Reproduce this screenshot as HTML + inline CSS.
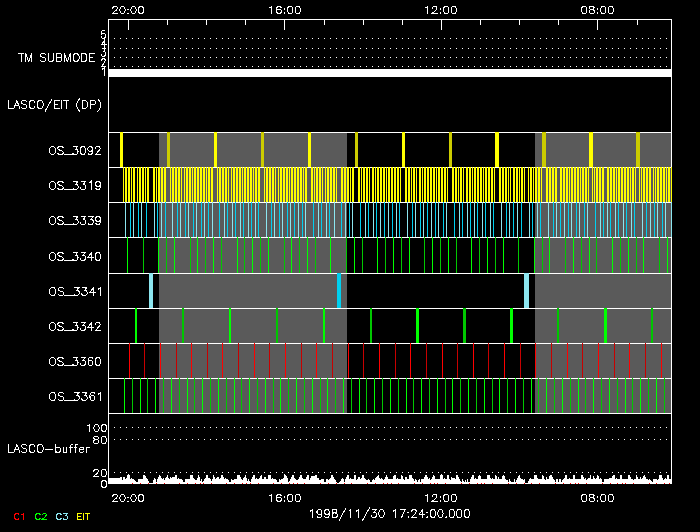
<!DOCTYPE html>
<html><head><meta charset="utf-8"><style>
html,body{margin:0;padding:0;background:#000;width:700px;height:532px;overflow:hidden;font-family:"Liberation Sans",sans-serif;}
svg{display:block}
</style></head><body>
<svg width="700" height="532" viewBox="0 0 700 532">
<rect width="700" height="532" fill="#000"/>
<g shape-rendering="crispEdges">
<rect x="159" y="132" width="188" height="35" fill="#5a5a5a"/>
<rect x="535" y="132" width="136" height="35" fill="#5a5a5a"/>
<rect x="159" y="167" width="188" height="35" fill="#5a5a5a"/>
<rect x="535" y="167" width="136" height="35" fill="#5a5a5a"/>
<rect x="159" y="202" width="188" height="35" fill="#5a5a5a"/>
<rect x="535" y="202" width="136" height="35" fill="#5a5a5a"/>
<rect x="159" y="237" width="188" height="36" fill="#5a5a5a"/>
<rect x="535" y="237" width="136" height="36" fill="#5a5a5a"/>
<rect x="159" y="273" width="188" height="35" fill="#5a5a5a"/>
<rect x="535" y="273" width="136" height="35" fill="#5a5a5a"/>
<rect x="159" y="308" width="188" height="35" fill="#5a5a5a"/>
<rect x="535" y="308" width="136" height="35" fill="#5a5a5a"/>
<rect x="159" y="343" width="188" height="35" fill="#5a5a5a"/>
<rect x="535" y="343" width="136" height="35" fill="#5a5a5a"/>
<rect x="159" y="378" width="188" height="35" fill="#5a5a5a"/>
<rect x="535" y="378" width="136" height="35" fill="#5a5a5a"/>
<rect x="108" y="19" width="564" height="1" fill="#fff"/>
<rect x="108" y="483" width="564" height="1" fill="#fff"/>
<rect x="108" y="19" width="1" height="465" fill="#fff"/>
<rect x="671" y="19" width="1" height="465" fill="#fff"/>
<rect x="108" y="132" width="564" height="1" fill="#fff"/>
<rect x="108" y="167" width="564" height="1" fill="#fff"/>
<rect x="108" y="202" width="564" height="1" fill="#fff"/>
<rect x="108" y="237" width="564" height="1" fill="#fff"/>
<rect x="108" y="273" width="564" height="1" fill="#fff"/>
<rect x="108" y="308" width="564" height="1" fill="#fff"/>
<rect x="108" y="343" width="564" height="1" fill="#fff"/>
<rect x="108" y="378" width="564" height="1" fill="#fff"/>
<rect x="108" y="413" width="564" height="1" fill="#fff"/>
<rect x="128" y="19" width="1" height="11" fill="#fff"/>
<rect x="167" y="19" width="1" height="6" fill="#fff"/>
<rect x="206" y="19" width="1" height="6" fill="#fff"/>
<rect x="245" y="19" width="1" height="6" fill="#fff"/>
<rect x="284" y="19" width="1" height="11" fill="#fff"/>
<rect x="324" y="19" width="1" height="6" fill="#fff"/>
<rect x="363" y="19" width="1" height="6" fill="#fff"/>
<rect x="402" y="19" width="1" height="6" fill="#fff"/>
<rect x="441" y="19" width="1" height="11" fill="#fff"/>
<rect x="480" y="19" width="1" height="6" fill="#fff"/>
<rect x="519" y="19" width="1" height="6" fill="#fff"/>
<rect x="558" y="19" width="1" height="6" fill="#fff"/>
<rect x="597" y="19" width="1" height="11" fill="#fff"/>
<rect x="637" y="19" width="1" height="6" fill="#fff"/>
<rect x="114" y="38" width="1" height="1" fill="#fff"/>
<rect x="120" y="38" width="1" height="1" fill="#fff"/>
<rect x="126" y="38" width="1" height="1" fill="#fff"/>
<rect x="132" y="38" width="1" height="1" fill="#fff"/>
<rect x="138" y="38" width="1" height="1" fill="#fff"/>
<rect x="144" y="38" width="1" height="1" fill="#fff"/>
<rect x="150" y="38" width="1" height="1" fill="#fff"/>
<rect x="156" y="38" width="1" height="1" fill="#fff"/>
<rect x="162" y="38" width="1" height="1" fill="#fff"/>
<rect x="168" y="38" width="1" height="1" fill="#fff"/>
<rect x="174" y="38" width="1" height="1" fill="#fff"/>
<rect x="180" y="38" width="1" height="1" fill="#fff"/>
<rect x="186" y="38" width="1" height="1" fill="#fff"/>
<rect x="192" y="38" width="1" height="1" fill="#fff"/>
<rect x="198" y="38" width="1" height="1" fill="#fff"/>
<rect x="204" y="38" width="1" height="1" fill="#fff"/>
<rect x="210" y="38" width="1" height="1" fill="#fff"/>
<rect x="216" y="38" width="1" height="1" fill="#fff"/>
<rect x="222" y="38" width="1" height="1" fill="#fff"/>
<rect x="228" y="38" width="1" height="1" fill="#fff"/>
<rect x="234" y="38" width="1" height="1" fill="#fff"/>
<rect x="240" y="38" width="1" height="1" fill="#fff"/>
<rect x="246" y="38" width="1" height="1" fill="#fff"/>
<rect x="252" y="38" width="1" height="1" fill="#fff"/>
<rect x="258" y="38" width="1" height="1" fill="#fff"/>
<rect x="264" y="38" width="1" height="1" fill="#fff"/>
<rect x="270" y="38" width="1" height="1" fill="#fff"/>
<rect x="276" y="38" width="1" height="1" fill="#fff"/>
<rect x="282" y="38" width="1" height="1" fill="#fff"/>
<rect x="288" y="38" width="1" height="1" fill="#fff"/>
<rect x="294" y="38" width="1" height="1" fill="#fff"/>
<rect x="300" y="38" width="1" height="1" fill="#fff"/>
<rect x="306" y="38" width="1" height="1" fill="#fff"/>
<rect x="312" y="38" width="1" height="1" fill="#fff"/>
<rect x="318" y="38" width="1" height="1" fill="#fff"/>
<rect x="324" y="38" width="1" height="1" fill="#fff"/>
<rect x="330" y="38" width="1" height="1" fill="#fff"/>
<rect x="336" y="38" width="1" height="1" fill="#fff"/>
<rect x="342" y="38" width="1" height="1" fill="#fff"/>
<rect x="348" y="38" width="1" height="1" fill="#fff"/>
<rect x="354" y="38" width="1" height="1" fill="#fff"/>
<rect x="360" y="38" width="1" height="1" fill="#fff"/>
<rect x="366" y="38" width="1" height="1" fill="#fff"/>
<rect x="372" y="38" width="1" height="1" fill="#fff"/>
<rect x="378" y="38" width="1" height="1" fill="#fff"/>
<rect x="384" y="38" width="1" height="1" fill="#fff"/>
<rect x="390" y="38" width="1" height="1" fill="#fff"/>
<rect x="396" y="38" width="1" height="1" fill="#fff"/>
<rect x="402" y="38" width="1" height="1" fill="#fff"/>
<rect x="408" y="38" width="1" height="1" fill="#fff"/>
<rect x="414" y="38" width="1" height="1" fill="#fff"/>
<rect x="420" y="38" width="1" height="1" fill="#fff"/>
<rect x="426" y="38" width="1" height="1" fill="#fff"/>
<rect x="432" y="38" width="1" height="1" fill="#fff"/>
<rect x="438" y="38" width="1" height="1" fill="#fff"/>
<rect x="444" y="38" width="1" height="1" fill="#fff"/>
<rect x="450" y="38" width="1" height="1" fill="#fff"/>
<rect x="456" y="38" width="1" height="1" fill="#fff"/>
<rect x="462" y="38" width="1" height="1" fill="#fff"/>
<rect x="468" y="38" width="1" height="1" fill="#fff"/>
<rect x="474" y="38" width="1" height="1" fill="#fff"/>
<rect x="480" y="38" width="1" height="1" fill="#fff"/>
<rect x="486" y="38" width="1" height="1" fill="#fff"/>
<rect x="492" y="38" width="1" height="1" fill="#fff"/>
<rect x="498" y="38" width="1" height="1" fill="#fff"/>
<rect x="504" y="38" width="1" height="1" fill="#fff"/>
<rect x="510" y="38" width="1" height="1" fill="#fff"/>
<rect x="516" y="38" width="1" height="1" fill="#fff"/>
<rect x="522" y="38" width="1" height="1" fill="#fff"/>
<rect x="528" y="38" width="1" height="1" fill="#fff"/>
<rect x="534" y="38" width="1" height="1" fill="#fff"/>
<rect x="540" y="38" width="1" height="1" fill="#fff"/>
<rect x="546" y="38" width="1" height="1" fill="#fff"/>
<rect x="552" y="38" width="1" height="1" fill="#fff"/>
<rect x="558" y="38" width="1" height="1" fill="#fff"/>
<rect x="564" y="38" width="1" height="1" fill="#fff"/>
<rect x="570" y="38" width="1" height="1" fill="#fff"/>
<rect x="576" y="38" width="1" height="1" fill="#fff"/>
<rect x="582" y="38" width="1" height="1" fill="#fff"/>
<rect x="588" y="38" width="1" height="1" fill="#fff"/>
<rect x="594" y="38" width="1" height="1" fill="#fff"/>
<rect x="600" y="38" width="1" height="1" fill="#fff"/>
<rect x="606" y="38" width="1" height="1" fill="#fff"/>
<rect x="612" y="38" width="1" height="1" fill="#fff"/>
<rect x="618" y="38" width="1" height="1" fill="#fff"/>
<rect x="624" y="38" width="1" height="1" fill="#fff"/>
<rect x="630" y="38" width="1" height="1" fill="#fff"/>
<rect x="636" y="38" width="1" height="1" fill="#fff"/>
<rect x="642" y="38" width="1" height="1" fill="#fff"/>
<rect x="648" y="38" width="1" height="1" fill="#fff"/>
<rect x="654" y="38" width="1" height="1" fill="#fff"/>
<rect x="660" y="38" width="1" height="1" fill="#fff"/>
<rect x="666" y="38" width="1" height="1" fill="#fff"/>
<rect x="114" y="48" width="1" height="1" fill="#fff"/>
<rect x="120" y="48" width="1" height="1" fill="#fff"/>
<rect x="126" y="48" width="1" height="1" fill="#fff"/>
<rect x="132" y="48" width="1" height="1" fill="#fff"/>
<rect x="138" y="48" width="1" height="1" fill="#fff"/>
<rect x="144" y="48" width="1" height="1" fill="#fff"/>
<rect x="150" y="48" width="1" height="1" fill="#fff"/>
<rect x="156" y="48" width="1" height="1" fill="#fff"/>
<rect x="162" y="48" width="1" height="1" fill="#fff"/>
<rect x="168" y="48" width="1" height="1" fill="#fff"/>
<rect x="174" y="48" width="1" height="1" fill="#fff"/>
<rect x="180" y="48" width="1" height="1" fill="#fff"/>
<rect x="186" y="48" width="1" height="1" fill="#fff"/>
<rect x="192" y="48" width="1" height="1" fill="#fff"/>
<rect x="198" y="48" width="1" height="1" fill="#fff"/>
<rect x="204" y="48" width="1" height="1" fill="#fff"/>
<rect x="210" y="48" width="1" height="1" fill="#fff"/>
<rect x="216" y="48" width="1" height="1" fill="#fff"/>
<rect x="222" y="48" width="1" height="1" fill="#fff"/>
<rect x="228" y="48" width="1" height="1" fill="#fff"/>
<rect x="234" y="48" width="1" height="1" fill="#fff"/>
<rect x="240" y="48" width="1" height="1" fill="#fff"/>
<rect x="246" y="48" width="1" height="1" fill="#fff"/>
<rect x="252" y="48" width="1" height="1" fill="#fff"/>
<rect x="258" y="48" width="1" height="1" fill="#fff"/>
<rect x="264" y="48" width="1" height="1" fill="#fff"/>
<rect x="270" y="48" width="1" height="1" fill="#fff"/>
<rect x="276" y="48" width="1" height="1" fill="#fff"/>
<rect x="282" y="48" width="1" height="1" fill="#fff"/>
<rect x="288" y="48" width="1" height="1" fill="#fff"/>
<rect x="294" y="48" width="1" height="1" fill="#fff"/>
<rect x="300" y="48" width="1" height="1" fill="#fff"/>
<rect x="306" y="48" width="1" height="1" fill="#fff"/>
<rect x="312" y="48" width="1" height="1" fill="#fff"/>
<rect x="318" y="48" width="1" height="1" fill="#fff"/>
<rect x="324" y="48" width="1" height="1" fill="#fff"/>
<rect x="330" y="48" width="1" height="1" fill="#fff"/>
<rect x="336" y="48" width="1" height="1" fill="#fff"/>
<rect x="342" y="48" width="1" height="1" fill="#fff"/>
<rect x="348" y="48" width="1" height="1" fill="#fff"/>
<rect x="354" y="48" width="1" height="1" fill="#fff"/>
<rect x="360" y="48" width="1" height="1" fill="#fff"/>
<rect x="366" y="48" width="1" height="1" fill="#fff"/>
<rect x="372" y="48" width="1" height="1" fill="#fff"/>
<rect x="378" y="48" width="1" height="1" fill="#fff"/>
<rect x="384" y="48" width="1" height="1" fill="#fff"/>
<rect x="390" y="48" width="1" height="1" fill="#fff"/>
<rect x="396" y="48" width="1" height="1" fill="#fff"/>
<rect x="402" y="48" width="1" height="1" fill="#fff"/>
<rect x="408" y="48" width="1" height="1" fill="#fff"/>
<rect x="414" y="48" width="1" height="1" fill="#fff"/>
<rect x="420" y="48" width="1" height="1" fill="#fff"/>
<rect x="426" y="48" width="1" height="1" fill="#fff"/>
<rect x="432" y="48" width="1" height="1" fill="#fff"/>
<rect x="438" y="48" width="1" height="1" fill="#fff"/>
<rect x="444" y="48" width="1" height="1" fill="#fff"/>
<rect x="450" y="48" width="1" height="1" fill="#fff"/>
<rect x="456" y="48" width="1" height="1" fill="#fff"/>
<rect x="462" y="48" width="1" height="1" fill="#fff"/>
<rect x="468" y="48" width="1" height="1" fill="#fff"/>
<rect x="474" y="48" width="1" height="1" fill="#fff"/>
<rect x="480" y="48" width="1" height="1" fill="#fff"/>
<rect x="486" y="48" width="1" height="1" fill="#fff"/>
<rect x="492" y="48" width="1" height="1" fill="#fff"/>
<rect x="498" y="48" width="1" height="1" fill="#fff"/>
<rect x="504" y="48" width="1" height="1" fill="#fff"/>
<rect x="510" y="48" width="1" height="1" fill="#fff"/>
<rect x="516" y="48" width="1" height="1" fill="#fff"/>
<rect x="522" y="48" width="1" height="1" fill="#fff"/>
<rect x="528" y="48" width="1" height="1" fill="#fff"/>
<rect x="534" y="48" width="1" height="1" fill="#fff"/>
<rect x="540" y="48" width="1" height="1" fill="#fff"/>
<rect x="546" y="48" width="1" height="1" fill="#fff"/>
<rect x="552" y="48" width="1" height="1" fill="#fff"/>
<rect x="558" y="48" width="1" height="1" fill="#fff"/>
<rect x="564" y="48" width="1" height="1" fill="#fff"/>
<rect x="570" y="48" width="1" height="1" fill="#fff"/>
<rect x="576" y="48" width="1" height="1" fill="#fff"/>
<rect x="582" y="48" width="1" height="1" fill="#fff"/>
<rect x="588" y="48" width="1" height="1" fill="#fff"/>
<rect x="594" y="48" width="1" height="1" fill="#fff"/>
<rect x="600" y="48" width="1" height="1" fill="#fff"/>
<rect x="606" y="48" width="1" height="1" fill="#fff"/>
<rect x="612" y="48" width="1" height="1" fill="#fff"/>
<rect x="618" y="48" width="1" height="1" fill="#fff"/>
<rect x="624" y="48" width="1" height="1" fill="#fff"/>
<rect x="630" y="48" width="1" height="1" fill="#fff"/>
<rect x="636" y="48" width="1" height="1" fill="#fff"/>
<rect x="642" y="48" width="1" height="1" fill="#fff"/>
<rect x="648" y="48" width="1" height="1" fill="#fff"/>
<rect x="654" y="48" width="1" height="1" fill="#fff"/>
<rect x="660" y="48" width="1" height="1" fill="#fff"/>
<rect x="666" y="48" width="1" height="1" fill="#fff"/>
<rect x="114" y="57" width="1" height="1" fill="#fff"/>
<rect x="120" y="57" width="1" height="1" fill="#fff"/>
<rect x="126" y="57" width="1" height="1" fill="#fff"/>
<rect x="132" y="57" width="1" height="1" fill="#fff"/>
<rect x="138" y="57" width="1" height="1" fill="#fff"/>
<rect x="144" y="57" width="1" height="1" fill="#fff"/>
<rect x="150" y="57" width="1" height="1" fill="#fff"/>
<rect x="156" y="57" width="1" height="1" fill="#fff"/>
<rect x="162" y="57" width="1" height="1" fill="#fff"/>
<rect x="168" y="57" width="1" height="1" fill="#fff"/>
<rect x="174" y="57" width="1" height="1" fill="#fff"/>
<rect x="180" y="57" width="1" height="1" fill="#fff"/>
<rect x="186" y="57" width="1" height="1" fill="#fff"/>
<rect x="192" y="57" width="1" height="1" fill="#fff"/>
<rect x="198" y="57" width="1" height="1" fill="#fff"/>
<rect x="204" y="57" width="1" height="1" fill="#fff"/>
<rect x="210" y="57" width="1" height="1" fill="#fff"/>
<rect x="216" y="57" width="1" height="1" fill="#fff"/>
<rect x="222" y="57" width="1" height="1" fill="#fff"/>
<rect x="228" y="57" width="1" height="1" fill="#fff"/>
<rect x="234" y="57" width="1" height="1" fill="#fff"/>
<rect x="240" y="57" width="1" height="1" fill="#fff"/>
<rect x="246" y="57" width="1" height="1" fill="#fff"/>
<rect x="252" y="57" width="1" height="1" fill="#fff"/>
<rect x="258" y="57" width="1" height="1" fill="#fff"/>
<rect x="264" y="57" width="1" height="1" fill="#fff"/>
<rect x="270" y="57" width="1" height="1" fill="#fff"/>
<rect x="276" y="57" width="1" height="1" fill="#fff"/>
<rect x="282" y="57" width="1" height="1" fill="#fff"/>
<rect x="288" y="57" width="1" height="1" fill="#fff"/>
<rect x="294" y="57" width="1" height="1" fill="#fff"/>
<rect x="300" y="57" width="1" height="1" fill="#fff"/>
<rect x="306" y="57" width="1" height="1" fill="#fff"/>
<rect x="312" y="57" width="1" height="1" fill="#fff"/>
<rect x="318" y="57" width="1" height="1" fill="#fff"/>
<rect x="324" y="57" width="1" height="1" fill="#fff"/>
<rect x="330" y="57" width="1" height="1" fill="#fff"/>
<rect x="336" y="57" width="1" height="1" fill="#fff"/>
<rect x="342" y="57" width="1" height="1" fill="#fff"/>
<rect x="348" y="57" width="1" height="1" fill="#fff"/>
<rect x="354" y="57" width="1" height="1" fill="#fff"/>
<rect x="360" y="57" width="1" height="1" fill="#fff"/>
<rect x="366" y="57" width="1" height="1" fill="#fff"/>
<rect x="372" y="57" width="1" height="1" fill="#fff"/>
<rect x="378" y="57" width="1" height="1" fill="#fff"/>
<rect x="384" y="57" width="1" height="1" fill="#fff"/>
<rect x="390" y="57" width="1" height="1" fill="#fff"/>
<rect x="396" y="57" width="1" height="1" fill="#fff"/>
<rect x="402" y="57" width="1" height="1" fill="#fff"/>
<rect x="408" y="57" width="1" height="1" fill="#fff"/>
<rect x="414" y="57" width="1" height="1" fill="#fff"/>
<rect x="420" y="57" width="1" height="1" fill="#fff"/>
<rect x="426" y="57" width="1" height="1" fill="#fff"/>
<rect x="432" y="57" width="1" height="1" fill="#fff"/>
<rect x="438" y="57" width="1" height="1" fill="#fff"/>
<rect x="444" y="57" width="1" height="1" fill="#fff"/>
<rect x="450" y="57" width="1" height="1" fill="#fff"/>
<rect x="456" y="57" width="1" height="1" fill="#fff"/>
<rect x="462" y="57" width="1" height="1" fill="#fff"/>
<rect x="468" y="57" width="1" height="1" fill="#fff"/>
<rect x="474" y="57" width="1" height="1" fill="#fff"/>
<rect x="480" y="57" width="1" height="1" fill="#fff"/>
<rect x="486" y="57" width="1" height="1" fill="#fff"/>
<rect x="492" y="57" width="1" height="1" fill="#fff"/>
<rect x="498" y="57" width="1" height="1" fill="#fff"/>
<rect x="504" y="57" width="1" height="1" fill="#fff"/>
<rect x="510" y="57" width="1" height="1" fill="#fff"/>
<rect x="516" y="57" width="1" height="1" fill="#fff"/>
<rect x="522" y="57" width="1" height="1" fill="#fff"/>
<rect x="528" y="57" width="1" height="1" fill="#fff"/>
<rect x="534" y="57" width="1" height="1" fill="#fff"/>
<rect x="540" y="57" width="1" height="1" fill="#fff"/>
<rect x="546" y="57" width="1" height="1" fill="#fff"/>
<rect x="552" y="57" width="1" height="1" fill="#fff"/>
<rect x="558" y="57" width="1" height="1" fill="#fff"/>
<rect x="564" y="57" width="1" height="1" fill="#fff"/>
<rect x="570" y="57" width="1" height="1" fill="#fff"/>
<rect x="576" y="57" width="1" height="1" fill="#fff"/>
<rect x="582" y="57" width="1" height="1" fill="#fff"/>
<rect x="588" y="57" width="1" height="1" fill="#fff"/>
<rect x="594" y="57" width="1" height="1" fill="#fff"/>
<rect x="600" y="57" width="1" height="1" fill="#fff"/>
<rect x="606" y="57" width="1" height="1" fill="#fff"/>
<rect x="612" y="57" width="1" height="1" fill="#fff"/>
<rect x="618" y="57" width="1" height="1" fill="#fff"/>
<rect x="624" y="57" width="1" height="1" fill="#fff"/>
<rect x="630" y="57" width="1" height="1" fill="#fff"/>
<rect x="636" y="57" width="1" height="1" fill="#fff"/>
<rect x="642" y="57" width="1" height="1" fill="#fff"/>
<rect x="648" y="57" width="1" height="1" fill="#fff"/>
<rect x="654" y="57" width="1" height="1" fill="#fff"/>
<rect x="660" y="57" width="1" height="1" fill="#fff"/>
<rect x="666" y="57" width="1" height="1" fill="#fff"/>
<rect x="114" y="66" width="1" height="1" fill="#fff"/>
<rect x="120" y="66" width="1" height="1" fill="#fff"/>
<rect x="126" y="66" width="1" height="1" fill="#fff"/>
<rect x="132" y="66" width="1" height="1" fill="#fff"/>
<rect x="138" y="66" width="1" height="1" fill="#fff"/>
<rect x="144" y="66" width="1" height="1" fill="#fff"/>
<rect x="150" y="66" width="1" height="1" fill="#fff"/>
<rect x="156" y="66" width="1" height="1" fill="#fff"/>
<rect x="162" y="66" width="1" height="1" fill="#fff"/>
<rect x="168" y="66" width="1" height="1" fill="#fff"/>
<rect x="174" y="66" width="1" height="1" fill="#fff"/>
<rect x="180" y="66" width="1" height="1" fill="#fff"/>
<rect x="186" y="66" width="1" height="1" fill="#fff"/>
<rect x="192" y="66" width="1" height="1" fill="#fff"/>
<rect x="198" y="66" width="1" height="1" fill="#fff"/>
<rect x="204" y="66" width="1" height="1" fill="#fff"/>
<rect x="210" y="66" width="1" height="1" fill="#fff"/>
<rect x="216" y="66" width="1" height="1" fill="#fff"/>
<rect x="222" y="66" width="1" height="1" fill="#fff"/>
<rect x="228" y="66" width="1" height="1" fill="#fff"/>
<rect x="234" y="66" width="1" height="1" fill="#fff"/>
<rect x="240" y="66" width="1" height="1" fill="#fff"/>
<rect x="246" y="66" width="1" height="1" fill="#fff"/>
<rect x="252" y="66" width="1" height="1" fill="#fff"/>
<rect x="258" y="66" width="1" height="1" fill="#fff"/>
<rect x="264" y="66" width="1" height="1" fill="#fff"/>
<rect x="270" y="66" width="1" height="1" fill="#fff"/>
<rect x="276" y="66" width="1" height="1" fill="#fff"/>
<rect x="282" y="66" width="1" height="1" fill="#fff"/>
<rect x="288" y="66" width="1" height="1" fill="#fff"/>
<rect x="294" y="66" width="1" height="1" fill="#fff"/>
<rect x="300" y="66" width="1" height="1" fill="#fff"/>
<rect x="306" y="66" width="1" height="1" fill="#fff"/>
<rect x="312" y="66" width="1" height="1" fill="#fff"/>
<rect x="318" y="66" width="1" height="1" fill="#fff"/>
<rect x="324" y="66" width="1" height="1" fill="#fff"/>
<rect x="330" y="66" width="1" height="1" fill="#fff"/>
<rect x="336" y="66" width="1" height="1" fill="#fff"/>
<rect x="342" y="66" width="1" height="1" fill="#fff"/>
<rect x="348" y="66" width="1" height="1" fill="#fff"/>
<rect x="354" y="66" width="1" height="1" fill="#fff"/>
<rect x="360" y="66" width="1" height="1" fill="#fff"/>
<rect x="366" y="66" width="1" height="1" fill="#fff"/>
<rect x="372" y="66" width="1" height="1" fill="#fff"/>
<rect x="378" y="66" width="1" height="1" fill="#fff"/>
<rect x="384" y="66" width="1" height="1" fill="#fff"/>
<rect x="390" y="66" width="1" height="1" fill="#fff"/>
<rect x="396" y="66" width="1" height="1" fill="#fff"/>
<rect x="402" y="66" width="1" height="1" fill="#fff"/>
<rect x="408" y="66" width="1" height="1" fill="#fff"/>
<rect x="414" y="66" width="1" height="1" fill="#fff"/>
<rect x="420" y="66" width="1" height="1" fill="#fff"/>
<rect x="426" y="66" width="1" height="1" fill="#fff"/>
<rect x="432" y="66" width="1" height="1" fill="#fff"/>
<rect x="438" y="66" width="1" height="1" fill="#fff"/>
<rect x="444" y="66" width="1" height="1" fill="#fff"/>
<rect x="450" y="66" width="1" height="1" fill="#fff"/>
<rect x="456" y="66" width="1" height="1" fill="#fff"/>
<rect x="462" y="66" width="1" height="1" fill="#fff"/>
<rect x="468" y="66" width="1" height="1" fill="#fff"/>
<rect x="474" y="66" width="1" height="1" fill="#fff"/>
<rect x="480" y="66" width="1" height="1" fill="#fff"/>
<rect x="486" y="66" width="1" height="1" fill="#fff"/>
<rect x="492" y="66" width="1" height="1" fill="#fff"/>
<rect x="498" y="66" width="1" height="1" fill="#fff"/>
<rect x="504" y="66" width="1" height="1" fill="#fff"/>
<rect x="510" y="66" width="1" height="1" fill="#fff"/>
<rect x="516" y="66" width="1" height="1" fill="#fff"/>
<rect x="522" y="66" width="1" height="1" fill="#fff"/>
<rect x="528" y="66" width="1" height="1" fill="#fff"/>
<rect x="534" y="66" width="1" height="1" fill="#fff"/>
<rect x="540" y="66" width="1" height="1" fill="#fff"/>
<rect x="546" y="66" width="1" height="1" fill="#fff"/>
<rect x="552" y="66" width="1" height="1" fill="#fff"/>
<rect x="558" y="66" width="1" height="1" fill="#fff"/>
<rect x="564" y="66" width="1" height="1" fill="#fff"/>
<rect x="570" y="66" width="1" height="1" fill="#fff"/>
<rect x="576" y="66" width="1" height="1" fill="#fff"/>
<rect x="582" y="66" width="1" height="1" fill="#fff"/>
<rect x="588" y="66" width="1" height="1" fill="#fff"/>
<rect x="594" y="66" width="1" height="1" fill="#fff"/>
<rect x="600" y="66" width="1" height="1" fill="#fff"/>
<rect x="606" y="66" width="1" height="1" fill="#fff"/>
<rect x="612" y="66" width="1" height="1" fill="#fff"/>
<rect x="618" y="66" width="1" height="1" fill="#fff"/>
<rect x="624" y="66" width="1" height="1" fill="#fff"/>
<rect x="630" y="66" width="1" height="1" fill="#fff"/>
<rect x="636" y="66" width="1" height="1" fill="#fff"/>
<rect x="642" y="66" width="1" height="1" fill="#fff"/>
<rect x="648" y="66" width="1" height="1" fill="#fff"/>
<rect x="654" y="66" width="1" height="1" fill="#fff"/>
<rect x="660" y="66" width="1" height="1" fill="#fff"/>
<rect x="666" y="66" width="1" height="1" fill="#fff"/>
<rect x="114" y="427" width="1" height="1" fill="#fff"/>
<rect x="120" y="427" width="1" height="1" fill="#fff"/>
<rect x="126" y="427" width="1" height="1" fill="#fff"/>
<rect x="132" y="427" width="1" height="1" fill="#fff"/>
<rect x="138" y="427" width="1" height="1" fill="#fff"/>
<rect x="144" y="427" width="1" height="1" fill="#fff"/>
<rect x="150" y="427" width="1" height="1" fill="#fff"/>
<rect x="156" y="427" width="1" height="1" fill="#fff"/>
<rect x="162" y="427" width="1" height="1" fill="#fff"/>
<rect x="168" y="427" width="1" height="1" fill="#fff"/>
<rect x="174" y="427" width="1" height="1" fill="#fff"/>
<rect x="180" y="427" width="1" height="1" fill="#fff"/>
<rect x="186" y="427" width="1" height="1" fill="#fff"/>
<rect x="192" y="427" width="1" height="1" fill="#fff"/>
<rect x="198" y="427" width="1" height="1" fill="#fff"/>
<rect x="204" y="427" width="1" height="1" fill="#fff"/>
<rect x="210" y="427" width="1" height="1" fill="#fff"/>
<rect x="216" y="427" width="1" height="1" fill="#fff"/>
<rect x="222" y="427" width="1" height="1" fill="#fff"/>
<rect x="228" y="427" width="1" height="1" fill="#fff"/>
<rect x="234" y="427" width="1" height="1" fill="#fff"/>
<rect x="240" y="427" width="1" height="1" fill="#fff"/>
<rect x="246" y="427" width="1" height="1" fill="#fff"/>
<rect x="252" y="427" width="1" height="1" fill="#fff"/>
<rect x="258" y="427" width="1" height="1" fill="#fff"/>
<rect x="264" y="427" width="1" height="1" fill="#fff"/>
<rect x="270" y="427" width="1" height="1" fill="#fff"/>
<rect x="276" y="427" width="1" height="1" fill="#fff"/>
<rect x="282" y="427" width="1" height="1" fill="#fff"/>
<rect x="288" y="427" width="1" height="1" fill="#fff"/>
<rect x="294" y="427" width="1" height="1" fill="#fff"/>
<rect x="300" y="427" width="1" height="1" fill="#fff"/>
<rect x="306" y="427" width="1" height="1" fill="#fff"/>
<rect x="312" y="427" width="1" height="1" fill="#fff"/>
<rect x="318" y="427" width="1" height="1" fill="#fff"/>
<rect x="324" y="427" width="1" height="1" fill="#fff"/>
<rect x="330" y="427" width="1" height="1" fill="#fff"/>
<rect x="336" y="427" width="1" height="1" fill="#fff"/>
<rect x="342" y="427" width="1" height="1" fill="#fff"/>
<rect x="348" y="427" width="1" height="1" fill="#fff"/>
<rect x="354" y="427" width="1" height="1" fill="#fff"/>
<rect x="360" y="427" width="1" height="1" fill="#fff"/>
<rect x="366" y="427" width="1" height="1" fill="#fff"/>
<rect x="372" y="427" width="1" height="1" fill="#fff"/>
<rect x="378" y="427" width="1" height="1" fill="#fff"/>
<rect x="384" y="427" width="1" height="1" fill="#fff"/>
<rect x="390" y="427" width="1" height="1" fill="#fff"/>
<rect x="396" y="427" width="1" height="1" fill="#fff"/>
<rect x="402" y="427" width="1" height="1" fill="#fff"/>
<rect x="408" y="427" width="1" height="1" fill="#fff"/>
<rect x="414" y="427" width="1" height="1" fill="#fff"/>
<rect x="420" y="427" width="1" height="1" fill="#fff"/>
<rect x="426" y="427" width="1" height="1" fill="#fff"/>
<rect x="432" y="427" width="1" height="1" fill="#fff"/>
<rect x="438" y="427" width="1" height="1" fill="#fff"/>
<rect x="444" y="427" width="1" height="1" fill="#fff"/>
<rect x="450" y="427" width="1" height="1" fill="#fff"/>
<rect x="456" y="427" width="1" height="1" fill="#fff"/>
<rect x="462" y="427" width="1" height="1" fill="#fff"/>
<rect x="468" y="427" width="1" height="1" fill="#fff"/>
<rect x="474" y="427" width="1" height="1" fill="#fff"/>
<rect x="480" y="427" width="1" height="1" fill="#fff"/>
<rect x="486" y="427" width="1" height="1" fill="#fff"/>
<rect x="492" y="427" width="1" height="1" fill="#fff"/>
<rect x="498" y="427" width="1" height="1" fill="#fff"/>
<rect x="504" y="427" width="1" height="1" fill="#fff"/>
<rect x="510" y="427" width="1" height="1" fill="#fff"/>
<rect x="516" y="427" width="1" height="1" fill="#fff"/>
<rect x="522" y="427" width="1" height="1" fill="#fff"/>
<rect x="528" y="427" width="1" height="1" fill="#fff"/>
<rect x="534" y="427" width="1" height="1" fill="#fff"/>
<rect x="540" y="427" width="1" height="1" fill="#fff"/>
<rect x="546" y="427" width="1" height="1" fill="#fff"/>
<rect x="552" y="427" width="1" height="1" fill="#fff"/>
<rect x="558" y="427" width="1" height="1" fill="#fff"/>
<rect x="564" y="427" width="1" height="1" fill="#fff"/>
<rect x="570" y="427" width="1" height="1" fill="#fff"/>
<rect x="576" y="427" width="1" height="1" fill="#fff"/>
<rect x="582" y="427" width="1" height="1" fill="#fff"/>
<rect x="588" y="427" width="1" height="1" fill="#fff"/>
<rect x="594" y="427" width="1" height="1" fill="#fff"/>
<rect x="600" y="427" width="1" height="1" fill="#fff"/>
<rect x="606" y="427" width="1" height="1" fill="#fff"/>
<rect x="612" y="427" width="1" height="1" fill="#fff"/>
<rect x="618" y="427" width="1" height="1" fill="#fff"/>
<rect x="624" y="427" width="1" height="1" fill="#fff"/>
<rect x="630" y="427" width="1" height="1" fill="#fff"/>
<rect x="636" y="427" width="1" height="1" fill="#fff"/>
<rect x="642" y="427" width="1" height="1" fill="#fff"/>
<rect x="648" y="427" width="1" height="1" fill="#fff"/>
<rect x="654" y="427" width="1" height="1" fill="#fff"/>
<rect x="660" y="427" width="1" height="1" fill="#fff"/>
<rect x="666" y="427" width="1" height="1" fill="#fff"/>
<rect x="114" y="439" width="1" height="1" fill="#fff"/>
<rect x="120" y="439" width="1" height="1" fill="#fff"/>
<rect x="126" y="439" width="1" height="1" fill="#fff"/>
<rect x="132" y="439" width="1" height="1" fill="#fff"/>
<rect x="138" y="439" width="1" height="1" fill="#fff"/>
<rect x="144" y="439" width="1" height="1" fill="#fff"/>
<rect x="150" y="439" width="1" height="1" fill="#fff"/>
<rect x="156" y="439" width="1" height="1" fill="#fff"/>
<rect x="162" y="439" width="1" height="1" fill="#fff"/>
<rect x="168" y="439" width="1" height="1" fill="#fff"/>
<rect x="174" y="439" width="1" height="1" fill="#fff"/>
<rect x="180" y="439" width="1" height="1" fill="#fff"/>
<rect x="186" y="439" width="1" height="1" fill="#fff"/>
<rect x="192" y="439" width="1" height="1" fill="#fff"/>
<rect x="198" y="439" width="1" height="1" fill="#fff"/>
<rect x="204" y="439" width="1" height="1" fill="#fff"/>
<rect x="210" y="439" width="1" height="1" fill="#fff"/>
<rect x="216" y="439" width="1" height="1" fill="#fff"/>
<rect x="222" y="439" width="1" height="1" fill="#fff"/>
<rect x="228" y="439" width="1" height="1" fill="#fff"/>
<rect x="234" y="439" width="1" height="1" fill="#fff"/>
<rect x="240" y="439" width="1" height="1" fill="#fff"/>
<rect x="246" y="439" width="1" height="1" fill="#fff"/>
<rect x="252" y="439" width="1" height="1" fill="#fff"/>
<rect x="258" y="439" width="1" height="1" fill="#fff"/>
<rect x="264" y="439" width="1" height="1" fill="#fff"/>
<rect x="270" y="439" width="1" height="1" fill="#fff"/>
<rect x="276" y="439" width="1" height="1" fill="#fff"/>
<rect x="282" y="439" width="1" height="1" fill="#fff"/>
<rect x="288" y="439" width="1" height="1" fill="#fff"/>
<rect x="294" y="439" width="1" height="1" fill="#fff"/>
<rect x="300" y="439" width="1" height="1" fill="#fff"/>
<rect x="306" y="439" width="1" height="1" fill="#fff"/>
<rect x="312" y="439" width="1" height="1" fill="#fff"/>
<rect x="318" y="439" width="1" height="1" fill="#fff"/>
<rect x="324" y="439" width="1" height="1" fill="#fff"/>
<rect x="330" y="439" width="1" height="1" fill="#fff"/>
<rect x="336" y="439" width="1" height="1" fill="#fff"/>
<rect x="342" y="439" width="1" height="1" fill="#fff"/>
<rect x="348" y="439" width="1" height="1" fill="#fff"/>
<rect x="354" y="439" width="1" height="1" fill="#fff"/>
<rect x="360" y="439" width="1" height="1" fill="#fff"/>
<rect x="366" y="439" width="1" height="1" fill="#fff"/>
<rect x="372" y="439" width="1" height="1" fill="#fff"/>
<rect x="378" y="439" width="1" height="1" fill="#fff"/>
<rect x="384" y="439" width="1" height="1" fill="#fff"/>
<rect x="390" y="439" width="1" height="1" fill="#fff"/>
<rect x="396" y="439" width="1" height="1" fill="#fff"/>
<rect x="402" y="439" width="1" height="1" fill="#fff"/>
<rect x="408" y="439" width="1" height="1" fill="#fff"/>
<rect x="414" y="439" width="1" height="1" fill="#fff"/>
<rect x="420" y="439" width="1" height="1" fill="#fff"/>
<rect x="426" y="439" width="1" height="1" fill="#fff"/>
<rect x="432" y="439" width="1" height="1" fill="#fff"/>
<rect x="438" y="439" width="1" height="1" fill="#fff"/>
<rect x="444" y="439" width="1" height="1" fill="#fff"/>
<rect x="450" y="439" width="1" height="1" fill="#fff"/>
<rect x="456" y="439" width="1" height="1" fill="#fff"/>
<rect x="462" y="439" width="1" height="1" fill="#fff"/>
<rect x="468" y="439" width="1" height="1" fill="#fff"/>
<rect x="474" y="439" width="1" height="1" fill="#fff"/>
<rect x="480" y="439" width="1" height="1" fill="#fff"/>
<rect x="486" y="439" width="1" height="1" fill="#fff"/>
<rect x="492" y="439" width="1" height="1" fill="#fff"/>
<rect x="498" y="439" width="1" height="1" fill="#fff"/>
<rect x="504" y="439" width="1" height="1" fill="#fff"/>
<rect x="510" y="439" width="1" height="1" fill="#fff"/>
<rect x="516" y="439" width="1" height="1" fill="#fff"/>
<rect x="522" y="439" width="1" height="1" fill="#fff"/>
<rect x="528" y="439" width="1" height="1" fill="#fff"/>
<rect x="534" y="439" width="1" height="1" fill="#fff"/>
<rect x="540" y="439" width="1" height="1" fill="#fff"/>
<rect x="546" y="439" width="1" height="1" fill="#fff"/>
<rect x="552" y="439" width="1" height="1" fill="#fff"/>
<rect x="558" y="439" width="1" height="1" fill="#fff"/>
<rect x="564" y="439" width="1" height="1" fill="#fff"/>
<rect x="570" y="439" width="1" height="1" fill="#fff"/>
<rect x="576" y="439" width="1" height="1" fill="#fff"/>
<rect x="582" y="439" width="1" height="1" fill="#fff"/>
<rect x="588" y="439" width="1" height="1" fill="#fff"/>
<rect x="594" y="439" width="1" height="1" fill="#fff"/>
<rect x="600" y="439" width="1" height="1" fill="#fff"/>
<rect x="606" y="439" width="1" height="1" fill="#fff"/>
<rect x="612" y="439" width="1" height="1" fill="#fff"/>
<rect x="618" y="439" width="1" height="1" fill="#fff"/>
<rect x="624" y="439" width="1" height="1" fill="#fff"/>
<rect x="630" y="439" width="1" height="1" fill="#fff"/>
<rect x="636" y="439" width="1" height="1" fill="#fff"/>
<rect x="642" y="439" width="1" height="1" fill="#fff"/>
<rect x="648" y="439" width="1" height="1" fill="#fff"/>
<rect x="654" y="439" width="1" height="1" fill="#fff"/>
<rect x="660" y="439" width="1" height="1" fill="#fff"/>
<rect x="666" y="439" width="1" height="1" fill="#fff"/>
<rect x="114" y="472" width="1" height="1" fill="#fff"/>
<rect x="120" y="472" width="1" height="1" fill="#fff"/>
<rect x="126" y="472" width="1" height="1" fill="#fff"/>
<rect x="132" y="472" width="1" height="1" fill="#fff"/>
<rect x="138" y="472" width="1" height="1" fill="#fff"/>
<rect x="144" y="472" width="1" height="1" fill="#fff"/>
<rect x="150" y="472" width="1" height="1" fill="#fff"/>
<rect x="156" y="472" width="1" height="1" fill="#fff"/>
<rect x="162" y="472" width="1" height="1" fill="#fff"/>
<rect x="168" y="472" width="1" height="1" fill="#fff"/>
<rect x="174" y="472" width="1" height="1" fill="#fff"/>
<rect x="180" y="472" width="1" height="1" fill="#fff"/>
<rect x="186" y="472" width="1" height="1" fill="#fff"/>
<rect x="192" y="472" width="1" height="1" fill="#fff"/>
<rect x="198" y="472" width="1" height="1" fill="#fff"/>
<rect x="204" y="472" width="1" height="1" fill="#fff"/>
<rect x="210" y="472" width="1" height="1" fill="#fff"/>
<rect x="216" y="472" width="1" height="1" fill="#fff"/>
<rect x="222" y="472" width="1" height="1" fill="#fff"/>
<rect x="228" y="472" width="1" height="1" fill="#fff"/>
<rect x="234" y="472" width="1" height="1" fill="#fff"/>
<rect x="240" y="472" width="1" height="1" fill="#fff"/>
<rect x="246" y="472" width="1" height="1" fill="#fff"/>
<rect x="252" y="472" width="1" height="1" fill="#fff"/>
<rect x="258" y="472" width="1" height="1" fill="#fff"/>
<rect x="264" y="472" width="1" height="1" fill="#fff"/>
<rect x="270" y="472" width="1" height="1" fill="#fff"/>
<rect x="276" y="472" width="1" height="1" fill="#fff"/>
<rect x="282" y="472" width="1" height="1" fill="#fff"/>
<rect x="288" y="472" width="1" height="1" fill="#fff"/>
<rect x="294" y="472" width="1" height="1" fill="#fff"/>
<rect x="300" y="472" width="1" height="1" fill="#fff"/>
<rect x="306" y="472" width="1" height="1" fill="#fff"/>
<rect x="312" y="472" width="1" height="1" fill="#fff"/>
<rect x="318" y="472" width="1" height="1" fill="#fff"/>
<rect x="324" y="472" width="1" height="1" fill="#fff"/>
<rect x="330" y="472" width="1" height="1" fill="#fff"/>
<rect x="336" y="472" width="1" height="1" fill="#fff"/>
<rect x="342" y="472" width="1" height="1" fill="#fff"/>
<rect x="348" y="472" width="1" height="1" fill="#fff"/>
<rect x="354" y="472" width="1" height="1" fill="#fff"/>
<rect x="360" y="472" width="1" height="1" fill="#fff"/>
<rect x="366" y="472" width="1" height="1" fill="#fff"/>
<rect x="372" y="472" width="1" height="1" fill="#fff"/>
<rect x="378" y="472" width="1" height="1" fill="#fff"/>
<rect x="384" y="472" width="1" height="1" fill="#fff"/>
<rect x="390" y="472" width="1" height="1" fill="#fff"/>
<rect x="396" y="472" width="1" height="1" fill="#fff"/>
<rect x="402" y="472" width="1" height="1" fill="#fff"/>
<rect x="408" y="472" width="1" height="1" fill="#fff"/>
<rect x="414" y="472" width="1" height="1" fill="#fff"/>
<rect x="420" y="472" width="1" height="1" fill="#fff"/>
<rect x="426" y="472" width="1" height="1" fill="#fff"/>
<rect x="432" y="472" width="1" height="1" fill="#fff"/>
<rect x="438" y="472" width="1" height="1" fill="#fff"/>
<rect x="444" y="472" width="1" height="1" fill="#fff"/>
<rect x="450" y="472" width="1" height="1" fill="#fff"/>
<rect x="456" y="472" width="1" height="1" fill="#fff"/>
<rect x="462" y="472" width="1" height="1" fill="#fff"/>
<rect x="468" y="472" width="1" height="1" fill="#fff"/>
<rect x="474" y="472" width="1" height="1" fill="#fff"/>
<rect x="480" y="472" width="1" height="1" fill="#fff"/>
<rect x="486" y="472" width="1" height="1" fill="#fff"/>
<rect x="492" y="472" width="1" height="1" fill="#fff"/>
<rect x="498" y="472" width="1" height="1" fill="#fff"/>
<rect x="504" y="472" width="1" height="1" fill="#fff"/>
<rect x="510" y="472" width="1" height="1" fill="#fff"/>
<rect x="516" y="472" width="1" height="1" fill="#fff"/>
<rect x="522" y="472" width="1" height="1" fill="#fff"/>
<rect x="528" y="472" width="1" height="1" fill="#fff"/>
<rect x="534" y="472" width="1" height="1" fill="#fff"/>
<rect x="540" y="472" width="1" height="1" fill="#fff"/>
<rect x="546" y="472" width="1" height="1" fill="#fff"/>
<rect x="552" y="472" width="1" height="1" fill="#fff"/>
<rect x="558" y="472" width="1" height="1" fill="#fff"/>
<rect x="564" y="472" width="1" height="1" fill="#fff"/>
<rect x="570" y="472" width="1" height="1" fill="#fff"/>
<rect x="576" y="472" width="1" height="1" fill="#fff"/>
<rect x="582" y="472" width="1" height="1" fill="#fff"/>
<rect x="588" y="472" width="1" height="1" fill="#fff"/>
<rect x="594" y="472" width="1" height="1" fill="#fff"/>
<rect x="600" y="472" width="1" height="1" fill="#fff"/>
<rect x="606" y="472" width="1" height="1" fill="#fff"/>
<rect x="612" y="472" width="1" height="1" fill="#fff"/>
<rect x="618" y="472" width="1" height="1" fill="#fff"/>
<rect x="624" y="472" width="1" height="1" fill="#fff"/>
<rect x="630" y="472" width="1" height="1" fill="#fff"/>
<rect x="636" y="472" width="1" height="1" fill="#fff"/>
<rect x="642" y="472" width="1" height="1" fill="#fff"/>
<rect x="648" y="472" width="1" height="1" fill="#fff"/>
<rect x="654" y="472" width="1" height="1" fill="#fff"/>
<rect x="660" y="472" width="1" height="1" fill="#fff"/>
<rect x="666" y="472" width="1" height="1" fill="#fff"/>
<rect x="109" y="69" width="562" height="8" fill="#fff"/>
<rect x="120" y="132" width="3" height="35" fill="#ffff00"/>
<rect x="167" y="132" width="3" height="35" fill="#cccc00"/>
<rect x="214" y="132" width="3" height="35" fill="#ffff00"/>
<rect x="261" y="132" width="3" height="35" fill="#cccc00"/>
<rect x="308" y="132" width="3" height="35" fill="#ffff00"/>
<rect x="355" y="132" width="3" height="35" fill="#cccc00"/>
<rect x="402" y="132" width="3" height="35" fill="#ffff00"/>
<rect x="449" y="132" width="3" height="35" fill="#cccc00"/>
<rect x="495" y="132" width="4" height="35" fill="#ffff00"/>
<rect x="542" y="132" width="4" height="35" fill="#cccc00"/>
<rect x="589" y="132" width="4" height="35" fill="#ffff00"/>
<rect x="636" y="132" width="4" height="35" fill="#cccc00"/>
<rect x="123" y="167" width="1" height="35" fill="#ffff00"/>
<rect x="125" y="167" width="2" height="35" fill="#ffff00"/>
<rect x="128" y="167" width="2" height="35" fill="#ffff00"/>
<rect x="131" y="167" width="1" height="35" fill="#ffff00"/>
<rect x="133" y="167" width="2" height="35" fill="#ffff00"/>
<rect x="137" y="167" width="1" height="35" fill="#ffff00"/>
<rect x="139" y="167" width="2" height="35" fill="#ffff00"/>
<rect x="142" y="167" width="2" height="35" fill="#ffff00"/>
<rect x="145" y="167" width="1" height="35" fill="#ffff00"/>
<rect x="147" y="167" width="2" height="35" fill="#ffff00"/>
<rect x="153" y="167" width="2" height="35" fill="#ffff00"/>
<rect x="156" y="167" width="1" height="35" fill="#ffff00"/>
<rect x="158" y="167" width="2" height="35" fill="#ffff00"/>
<rect x="161" y="167" width="2" height="35" fill="#ffff00"/>
<rect x="164" y="167" width="2" height="35" fill="#ffff00"/>
<rect x="170" y="167" width="1" height="35" fill="#ffff00"/>
<rect x="172" y="167" width="2" height="35" fill="#ffff00"/>
<rect x="175" y="167" width="2" height="35" fill="#ffff00"/>
<rect x="178" y="167" width="2" height="35" fill="#ffff00"/>
<rect x="181" y="167" width="1" height="35" fill="#ffff00"/>
<rect x="184" y="167" width="1" height="35" fill="#ffff00"/>
<rect x="186" y="167" width="2" height="35" fill="#ffff00"/>
<rect x="189" y="167" width="2" height="35" fill="#ffff00"/>
<rect x="192" y="167" width="1" height="35" fill="#ffff00"/>
<rect x="194" y="167" width="2" height="35" fill="#ffff00"/>
<rect x="197" y="167" width="2" height="35" fill="#ffff00"/>
<rect x="200" y="167" width="2" height="35" fill="#ffff00"/>
<rect x="203" y="167" width="2" height="35" fill="#ffff00"/>
<rect x="206" y="167" width="1" height="35" fill="#ffff00"/>
<rect x="208" y="167" width="2" height="35" fill="#ffff00"/>
<rect x="211" y="167" width="2" height="35" fill="#ffff00"/>
<rect x="217" y="167" width="1" height="35" fill="#ffff00"/>
<rect x="219" y="167" width="2" height="35" fill="#ffff00"/>
<rect x="222" y="167" width="2" height="35" fill="#ffff00"/>
<rect x="225" y="167" width="2" height="35" fill="#ffff00"/>
<rect x="228" y="167" width="1" height="35" fill="#ffff00"/>
<rect x="231" y="167" width="1" height="35" fill="#ffff00"/>
<rect x="233" y="167" width="2" height="35" fill="#ffff00"/>
<rect x="236" y="167" width="2" height="35" fill="#ffff00"/>
<rect x="239" y="167" width="2" height="35" fill="#ffff00"/>
<rect x="242" y="167" width="1" height="35" fill="#ffff00"/>
<rect x="244" y="167" width="2" height="35" fill="#ffff00"/>
<rect x="247" y="167" width="2" height="35" fill="#ffff00"/>
<rect x="250" y="167" width="2" height="35" fill="#ffff00"/>
<rect x="253" y="167" width="1" height="35" fill="#ffff00"/>
<rect x="255" y="167" width="2" height="35" fill="#ffff00"/>
<rect x="258" y="167" width="2" height="35" fill="#ffff00"/>
<rect x="264" y="167" width="1" height="35" fill="#ffff00"/>
<rect x="266" y="167" width="2" height="35" fill="#ffff00"/>
<rect x="269" y="167" width="2" height="35" fill="#ffff00"/>
<rect x="272" y="167" width="2" height="35" fill="#ffff00"/>
<rect x="275" y="167" width="1" height="35" fill="#ffff00"/>
<rect x="278" y="167" width="1" height="35" fill="#ffff00"/>
<rect x="280" y="167" width="2" height="35" fill="#ffff00"/>
<rect x="283" y="167" width="2" height="35" fill="#ffff00"/>
<rect x="286" y="167" width="2" height="35" fill="#ffff00"/>
<rect x="289" y="167" width="1" height="35" fill="#ffff00"/>
<rect x="291" y="167" width="2" height="35" fill="#ffff00"/>
<rect x="294" y="167" width="2" height="35" fill="#ffff00"/>
<rect x="297" y="167" width="2" height="35" fill="#ffff00"/>
<rect x="300" y="167" width="2" height="35" fill="#ffff00"/>
<rect x="303" y="167" width="1" height="35" fill="#ffff00"/>
<rect x="305" y="167" width="2" height="35" fill="#ffff00"/>
<rect x="311" y="167" width="2" height="35" fill="#ffff00"/>
<rect x="314" y="167" width="1" height="35" fill="#ffff00"/>
<rect x="316" y="167" width="2" height="35" fill="#ffff00"/>
<rect x="319" y="167" width="2" height="35" fill="#ffff00"/>
<rect x="322" y="167" width="1" height="35" fill="#ffff00"/>
<rect x="325" y="167" width="1" height="35" fill="#ffff00"/>
<rect x="327" y="167" width="2" height="35" fill="#ffff00"/>
<rect x="330" y="167" width="2" height="35" fill="#ffff00"/>
<rect x="333" y="167" width="2" height="35" fill="#ffff00"/>
<rect x="336" y="167" width="1" height="35" fill="#ffff00"/>
<rect x="341" y="167" width="2" height="35" fill="#ffff00"/>
<rect x="344" y="167" width="2" height="35" fill="#ffff00"/>
<rect x="347" y="167" width="2" height="35" fill="#ffff00"/>
<rect x="350" y="167" width="1" height="35" fill="#ffff00"/>
<rect x="352" y="167" width="2" height="35" fill="#ffff00"/>
<rect x="358" y="167" width="2" height="35" fill="#ffff00"/>
<rect x="361" y="167" width="1" height="35" fill="#ffff00"/>
<rect x="363" y="167" width="2" height="35" fill="#ffff00"/>
<rect x="366" y="167" width="2" height="35" fill="#ffff00"/>
<rect x="369" y="167" width="1" height="35" fill="#ffff00"/>
<rect x="372" y="167" width="2" height="35" fill="#ffff00"/>
<rect x="375" y="167" width="1" height="35" fill="#ffff00"/>
<rect x="377" y="167" width="2" height="35" fill="#ffff00"/>
<rect x="380" y="167" width="2" height="35" fill="#ffff00"/>
<rect x="383" y="167" width="2" height="35" fill="#ffff00"/>
<rect x="386" y="167" width="1" height="35" fill="#ffff00"/>
<rect x="388" y="167" width="2" height="35" fill="#ffff00"/>
<rect x="391" y="167" width="2" height="35" fill="#ffff00"/>
<rect x="394" y="167" width="2" height="35" fill="#ffff00"/>
<rect x="397" y="167" width="2" height="35" fill="#ffff00"/>
<rect x="400" y="167" width="1" height="35" fill="#ffff00"/>
<rect x="405" y="167" width="2" height="35" fill="#ffff00"/>
<rect x="408" y="167" width="2" height="35" fill="#ffff00"/>
<rect x="411" y="167" width="1" height="35" fill="#ffff00"/>
<rect x="413" y="167" width="2" height="35" fill="#ffff00"/>
<rect x="416" y="167" width="1" height="35" fill="#ffff00"/>
<rect x="419" y="167" width="2" height="35" fill="#ffff00"/>
<rect x="422" y="167" width="1" height="35" fill="#ffff00"/>
<rect x="424" y="167" width="2" height="35" fill="#ffff00"/>
<rect x="427" y="167" width="2" height="35" fill="#ffff00"/>
<rect x="430" y="167" width="2" height="35" fill="#ffff00"/>
<rect x="433" y="167" width="2" height="35" fill="#ffff00"/>
<rect x="436" y="167" width="1" height="35" fill="#ffff00"/>
<rect x="438" y="167" width="2" height="35" fill="#ffff00"/>
<rect x="441" y="167" width="2" height="35" fill="#ffff00"/>
<rect x="444" y="167" width="2" height="35" fill="#ffff00"/>
<rect x="447" y="167" width="1" height="35" fill="#ffff00"/>
<rect x="452" y="167" width="2" height="35" fill="#ffff00"/>
<rect x="455" y="167" width="2" height="35" fill="#ffff00"/>
<rect x="458" y="167" width="1" height="35" fill="#ffff00"/>
<rect x="460" y="167" width="2" height="35" fill="#ffff00"/>
<rect x="463" y="167" width="1" height="35" fill="#ffff00"/>
<rect x="466" y="167" width="2" height="35" fill="#ffff00"/>
<rect x="469" y="167" width="2" height="35" fill="#ffff00"/>
<rect x="472" y="167" width="1" height="35" fill="#ffff00"/>
<rect x="474" y="167" width="2" height="35" fill="#ffff00"/>
<rect x="477" y="167" width="2" height="35" fill="#ffff00"/>
<rect x="480" y="167" width="2" height="35" fill="#ffff00"/>
<rect x="483" y="167" width="1" height="35" fill="#ffff00"/>
<rect x="485" y="167" width="2" height="35" fill="#ffff00"/>
<rect x="488" y="167" width="2" height="35" fill="#ffff00"/>
<rect x="491" y="167" width="2" height="35" fill="#ffff00"/>
<rect x="494" y="167" width="1" height="35" fill="#ffff00"/>
<rect x="499" y="167" width="2" height="35" fill="#ffff00"/>
<rect x="502" y="167" width="2" height="35" fill="#ffff00"/>
<rect x="505" y="167" width="2" height="35" fill="#ffff00"/>
<rect x="508" y="167" width="1" height="35" fill="#ffff00"/>
<rect x="510" y="167" width="1" height="35" fill="#ffff00"/>
<rect x="513" y="167" width="2" height="35" fill="#ffff00"/>
<rect x="516" y="167" width="2" height="35" fill="#ffff00"/>
<rect x="519" y="167" width="1" height="35" fill="#ffff00"/>
<rect x="521" y="167" width="2" height="35" fill="#ffff00"/>
<rect x="524" y="167" width="1" height="35" fill="#ffff00"/>
<rect x="528" y="167" width="1" height="35" fill="#ffff00"/>
<rect x="530" y="167" width="2" height="35" fill="#ffff00"/>
<rect x="533" y="167" width="1" height="35" fill="#ffff00"/>
<rect x="535" y="167" width="2" height="35" fill="#ffff00"/>
<rect x="538" y="167" width="2" height="35" fill="#ffff00"/>
<rect x="541" y="167" width="1" height="35" fill="#ffff00"/>
<rect x="546" y="167" width="2" height="35" fill="#ffff00"/>
<rect x="549" y="167" width="2" height="35" fill="#ffff00"/>
<rect x="552" y="167" width="2" height="35" fill="#ffff00"/>
<rect x="555" y="167" width="2" height="35" fill="#ffff00"/>
<rect x="560" y="167" width="2" height="35" fill="#ffff00"/>
<rect x="563" y="167" width="2" height="35" fill="#ffff00"/>
<rect x="566" y="167" width="2" height="35" fill="#ffff00"/>
<rect x="569" y="167" width="1" height="35" fill="#ffff00"/>
<rect x="571" y="167" width="2" height="35" fill="#ffff00"/>
<rect x="574" y="167" width="2" height="35" fill="#ffff00"/>
<rect x="577" y="167" width="2" height="35" fill="#ffff00"/>
<rect x="580" y="167" width="1" height="35" fill="#ffff00"/>
<rect x="582" y="167" width="2" height="35" fill="#ffff00"/>
<rect x="585" y="167" width="2" height="35" fill="#ffff00"/>
<rect x="588" y="167" width="1" height="35" fill="#ffff00"/>
<rect x="592" y="167" width="1" height="35" fill="#ffff00"/>
<rect x="594" y="167" width="1" height="35" fill="#ffff00"/>
<rect x="596" y="167" width="2" height="35" fill="#ffff00"/>
<rect x="599" y="167" width="2" height="35" fill="#ffff00"/>
<rect x="602" y="167" width="2" height="35" fill="#ffff00"/>
<rect x="607" y="167" width="2" height="35" fill="#ffff00"/>
<rect x="610" y="167" width="2" height="35" fill="#ffff00"/>
<rect x="613" y="167" width="2" height="35" fill="#ffff00"/>
<rect x="616" y="167" width="1" height="35" fill="#ffff00"/>
<rect x="618" y="167" width="2" height="35" fill="#ffff00"/>
<rect x="621" y="167" width="2" height="35" fill="#ffff00"/>
<rect x="624" y="167" width="2" height="35" fill="#ffff00"/>
<rect x="627" y="167" width="2" height="35" fill="#ffff00"/>
<rect x="630" y="167" width="1" height="35" fill="#ffff00"/>
<rect x="632" y="167" width="2" height="35" fill="#ffff00"/>
<rect x="635" y="167" width="1" height="35" fill="#ffff00"/>
<rect x="639" y="167" width="1" height="35" fill="#ffff00"/>
<rect x="641" y="167" width="1" height="35" fill="#ffff00"/>
<rect x="643" y="167" width="2" height="35" fill="#ffff00"/>
<rect x="646" y="167" width="2" height="35" fill="#ffff00"/>
<rect x="649" y="167" width="2" height="35" fill="#ffff00"/>
<rect x="653" y="167" width="1" height="35" fill="#ffff00"/>
<rect x="655" y="167" width="1" height="35" fill="#ffff00"/>
<rect x="657" y="167" width="2" height="35" fill="#ffff00"/>
<rect x="660" y="167" width="2" height="35" fill="#ffff00"/>
<rect x="663" y="167" width="2" height="35" fill="#ffff00"/>
<rect x="666" y="167" width="1" height="35" fill="#ffff00"/>
<rect x="668" y="167" width="2" height="35" fill="#ffff00"/>
<rect x="671" y="167" width="1" height="35" fill="#ffff00"/>
<rect x="125" y="202" width="1" height="35" fill="#8ce6f0"/>
<rect x="133" y="202" width="1" height="35" fill="#8ce6f0"/>
<rect x="141" y="202" width="1" height="35" fill="#8ce6f0"/>
<rect x="154" y="202" width="1" height="35" fill="#8ce6f0"/>
<rect x="161" y="202" width="1" height="35" fill="#8ce6f0"/>
<rect x="172" y="202" width="1" height="35" fill="#8ce6f0"/>
<rect x="180" y="202" width="1" height="35" fill="#8ce6f0"/>
<rect x="188" y="202" width="1" height="35" fill="#8ce6f0"/>
<rect x="196" y="202" width="1" height="35" fill="#8ce6f0"/>
<rect x="204" y="202" width="1" height="35" fill="#8ce6f0"/>
<rect x="212" y="202" width="1" height="35" fill="#8ce6f0"/>
<rect x="224" y="202" width="1" height="35" fill="#8ce6f0"/>
<rect x="232" y="202" width="1" height="35" fill="#8ce6f0"/>
<rect x="240" y="202" width="1" height="35" fill="#8ce6f0"/>
<rect x="248" y="202" width="1" height="35" fill="#8ce6f0"/>
<rect x="255" y="202" width="1" height="35" fill="#8ce6f0"/>
<rect x="266" y="202" width="1" height="35" fill="#8ce6f0"/>
<rect x="274" y="202" width="1" height="35" fill="#8ce6f0"/>
<rect x="282" y="202" width="1" height="35" fill="#8ce6f0"/>
<rect x="290" y="202" width="1" height="35" fill="#8ce6f0"/>
<rect x="298" y="202" width="1" height="35" fill="#8ce6f0"/>
<rect x="305" y="202" width="1" height="35" fill="#8ce6f0"/>
<rect x="318" y="202" width="1" height="35" fill="#8ce6f0"/>
<rect x="326" y="202" width="1" height="35" fill="#8ce6f0"/>
<rect x="334" y="202" width="1" height="35" fill="#8ce6f0"/>
<rect x="345" y="202" width="1" height="35" fill="#8ce6f0"/>
<rect x="352" y="202" width="1" height="35" fill="#8ce6f0"/>
<rect x="365" y="202" width="1" height="35" fill="#8ce6f0"/>
<rect x="373" y="202" width="1" height="35" fill="#8ce6f0"/>
<rect x="380" y="202" width="1" height="35" fill="#8ce6f0"/>
<rect x="388" y="202" width="1" height="35" fill="#8ce6f0"/>
<rect x="396" y="202" width="1" height="35" fill="#8ce6f0"/>
<rect x="407" y="202" width="1" height="35" fill="#8ce6f0"/>
<rect x="415" y="202" width="1" height="35" fill="#8ce6f0"/>
<rect x="423" y="202" width="1" height="35" fill="#8ce6f0"/>
<rect x="431" y="202" width="1" height="35" fill="#8ce6f0"/>
<rect x="438" y="202" width="1" height="35" fill="#8ce6f0"/>
<rect x="446" y="202" width="1" height="35" fill="#8ce6f0"/>
<rect x="459" y="202" width="1" height="35" fill="#8ce6f0"/>
<rect x="467" y="202" width="1" height="35" fill="#8ce6f0"/>
<rect x="474" y="202" width="1" height="35" fill="#8ce6f0"/>
<rect x="482" y="202" width="1" height="35" fill="#8ce6f0"/>
<rect x="490" y="202" width="1" height="35" fill="#8ce6f0"/>
<rect x="501" y="202" width="1" height="35" fill="#8ce6f0"/>
<rect x="509" y="202" width="1" height="35" fill="#8ce6f0"/>
<rect x="517" y="202" width="1" height="35" fill="#8ce6f0"/>
<rect x="529" y="202" width="1" height="35" fill="#8ce6f0"/>
<rect x="537" y="202" width="1" height="35" fill="#8ce6f0"/>
<rect x="548" y="202" width="1" height="35" fill="#8ce6f0"/>
<rect x="556" y="202" width="1" height="35" fill="#8ce6f0"/>
<rect x="564" y="202" width="1" height="35" fill="#8ce6f0"/>
<rect x="571" y="202" width="1" height="35" fill="#8ce6f0"/>
<rect x="579" y="202" width="1" height="35" fill="#8ce6f0"/>
<rect x="587" y="202" width="1" height="35" fill="#8ce6f0"/>
<rect x="600" y="202" width="1" height="35" fill="#8ce6f0"/>
<rect x="607" y="202" width="1" height="35" fill="#8ce6f0"/>
<rect x="615" y="202" width="1" height="35" fill="#8ce6f0"/>
<rect x="623" y="202" width="1" height="35" fill="#8ce6f0"/>
<rect x="631" y="202" width="1" height="35" fill="#8ce6f0"/>
<rect x="642" y="202" width="1" height="35" fill="#8ce6f0"/>
<rect x="650" y="202" width="1" height="35" fill="#8ce6f0"/>
<rect x="657" y="202" width="1" height="35" fill="#8ce6f0"/>
<rect x="665" y="202" width="1" height="35" fill="#8ce6f0"/>
<rect x="671" y="202" width="1" height="35" fill="#8ce6f0"/>
<rect x="130" y="202" width="1" height="35" fill="#00d0f0"/>
<rect x="138" y="202" width="1" height="35" fill="#00d0f0"/>
<rect x="146" y="202" width="1" height="35" fill="#00d0f0"/>
<rect x="157" y="202" width="1" height="35" fill="#00d0f0"/>
<rect x="165" y="202" width="1" height="35" fill="#00d0f0"/>
<rect x="177" y="202" width="1" height="35" fill="#00d0f0"/>
<rect x="185" y="202" width="1" height="35" fill="#00d0f0"/>
<rect x="193" y="202" width="1" height="35" fill="#00d0f0"/>
<rect x="201" y="202" width="1" height="35" fill="#00d0f0"/>
<rect x="208" y="202" width="1" height="35" fill="#00d0f0"/>
<rect x="219" y="202" width="1" height="35" fill="#00d0f0"/>
<rect x="227" y="202" width="1" height="35" fill="#00d0f0"/>
<rect x="235" y="202" width="1" height="35" fill="#00d0f0"/>
<rect x="243" y="202" width="1" height="35" fill="#00d0f0"/>
<rect x="251" y="202" width="1" height="35" fill="#00d0f0"/>
<rect x="258" y="202" width="1" height="35" fill="#00d0f0"/>
<rect x="271" y="202" width="1" height="35" fill="#00d0f0"/>
<rect x="279" y="202" width="1" height="35" fill="#00d0f0"/>
<rect x="287" y="202" width="1" height="35" fill="#00d0f0"/>
<rect x="294" y="202" width="1" height="35" fill="#00d0f0"/>
<rect x="302" y="202" width="1" height="35" fill="#00d0f0"/>
<rect x="313" y="202" width="1" height="35" fill="#00d0f0"/>
<rect x="321" y="202" width="1" height="35" fill="#00d0f0"/>
<rect x="329" y="202" width="1" height="35" fill="#00d0f0"/>
<rect x="341" y="202" width="1" height="35" fill="#00d0f0"/>
<rect x="349" y="202" width="1" height="35" fill="#00d0f0"/>
<rect x="360" y="202" width="1" height="35" fill="#00d0f0"/>
<rect x="368" y="202" width="1" height="35" fill="#00d0f0"/>
<rect x="376" y="202" width="1" height="35" fill="#00d0f0"/>
<rect x="384" y="202" width="1" height="35" fill="#00d0f0"/>
<rect x="392" y="202" width="1" height="35" fill="#00d0f0"/>
<rect x="399" y="202" width="1" height="35" fill="#00d0f0"/>
<rect x="412" y="202" width="1" height="35" fill="#00d0f0"/>
<rect x="420" y="202" width="1" height="35" fill="#00d0f0"/>
<rect x="427" y="202" width="1" height="35" fill="#00d0f0"/>
<rect x="435" y="202" width="1" height="35" fill="#00d0f0"/>
<rect x="443" y="202" width="1" height="35" fill="#00d0f0"/>
<rect x="454" y="202" width="1" height="35" fill="#00d0f0"/>
<rect x="462" y="202" width="1" height="35" fill="#00d0f0"/>
<rect x="470" y="202" width="1" height="35" fill="#00d0f0"/>
<rect x="477" y="202" width="1" height="35" fill="#00d0f0"/>
<rect x="485" y="202" width="1" height="35" fill="#00d0f0"/>
<rect x="493" y="202" width="1" height="35" fill="#00d0f0"/>
<rect x="506" y="202" width="1" height="35" fill="#00d0f0"/>
<rect x="513" y="202" width="1" height="35" fill="#00d0f0"/>
<rect x="521" y="202" width="1" height="35" fill="#00d0f0"/>
<rect x="532" y="202" width="1" height="35" fill="#00d0f0"/>
<rect x="540" y="202" width="1" height="35" fill="#00d0f0"/>
<rect x="553" y="202" width="1" height="35" fill="#00d0f0"/>
<rect x="560" y="202" width="1" height="35" fill="#00d0f0"/>
<rect x="568" y="202" width="1" height="35" fill="#00d0f0"/>
<rect x="576" y="202" width="1" height="35" fill="#00d0f0"/>
<rect x="584" y="202" width="1" height="35" fill="#00d0f0"/>
<rect x="595" y="202" width="1" height="35" fill="#00d0f0"/>
<rect x="603" y="202" width="1" height="35" fill="#00d0f0"/>
<rect x="610" y="202" width="1" height="35" fill="#00d0f0"/>
<rect x="618" y="202" width="1" height="35" fill="#00d0f0"/>
<rect x="626" y="202" width="1" height="35" fill="#00d0f0"/>
<rect x="634" y="202" width="1" height="35" fill="#00d0f0"/>
<rect x="646" y="202" width="1" height="35" fill="#00d0f0"/>
<rect x="654" y="202" width="1" height="35" fill="#00d0f0"/>
<rect x="662" y="202" width="1" height="35" fill="#00d0f0"/>
<rect x="127" y="237" width="1" height="36" fill="#00ff00"/>
<rect x="143" y="237" width="1" height="36" fill="#00c800"/>
<rect x="158" y="237" width="1" height="36" fill="#00ff00"/>
<rect x="166" y="237" width="1" height="36" fill="#00c800"/>
<rect x="174" y="237" width="1" height="36" fill="#00ff00"/>
<rect x="190" y="237" width="1" height="36" fill="#00c800"/>
<rect x="197" y="237" width="1" height="36" fill="#00ff00"/>
<rect x="205" y="237" width="1" height="36" fill="#00c800"/>
<rect x="213" y="237" width="1" height="36" fill="#00ff00"/>
<rect x="221" y="237" width="1" height="36" fill="#00c800"/>
<rect x="237" y="237" width="1" height="36" fill="#00ff00"/>
<rect x="244" y="237" width="1" height="36" fill="#00c800"/>
<rect x="252" y="237" width="1" height="36" fill="#00ff00"/>
<rect x="260" y="237" width="1" height="36" fill="#00c800"/>
<rect x="268" y="237" width="1" height="36" fill="#00ff00"/>
<rect x="284" y="237" width="1" height="36" fill="#00c800"/>
<rect x="291" y="237" width="1" height="36" fill="#00ff00"/>
<rect x="299" y="237" width="1" height="36" fill="#00c800"/>
<rect x="307" y="237" width="1" height="36" fill="#00ff00"/>
<rect x="315" y="237" width="1" height="36" fill="#00c800"/>
<rect x="330" y="237" width="1" height="36" fill="#00ff00"/>
<rect x="346" y="237" width="1" height="36" fill="#00c800"/>
<rect x="354" y="237" width="1" height="36" fill="#00ff00"/>
<rect x="362" y="237" width="1" height="36" fill="#00c800"/>
<rect x="377" y="237" width="1" height="36" fill="#00ff00"/>
<rect x="385" y="237" width="1" height="36" fill="#00c800"/>
<rect x="393" y="237" width="1" height="36" fill="#00ff00"/>
<rect x="401" y="237" width="1" height="36" fill="#00c800"/>
<rect x="409" y="237" width="1" height="36" fill="#00ff00"/>
<rect x="424" y="237" width="1" height="36" fill="#00c800"/>
<rect x="432" y="237" width="1" height="36" fill="#00ff00"/>
<rect x="440" y="237" width="1" height="36" fill="#00c800"/>
<rect x="448" y="237" width="1" height="36" fill="#00ff00"/>
<rect x="456" y="237" width="1" height="36" fill="#00c800"/>
<rect x="471" y="237" width="1" height="36" fill="#00ff00"/>
<rect x="479" y="237" width="1" height="36" fill="#00c800"/>
<rect x="487" y="237" width="1" height="36" fill="#00ff00"/>
<rect x="495" y="237" width="1" height="36" fill="#00c800"/>
<rect x="503" y="237" width="1" height="36" fill="#00ff00"/>
<rect x="518" y="237" width="1" height="36" fill="#00c800"/>
<rect x="534" y="237" width="1" height="36" fill="#00ff00"/>
<rect x="542" y="237" width="1" height="36" fill="#00c800"/>
<rect x="549" y="237" width="1" height="36" fill="#00ff00"/>
<rect x="565" y="237" width="1" height="36" fill="#00c800"/>
<rect x="573" y="237" width="1" height="36" fill="#00ff00"/>
<rect x="581" y="237" width="1" height="36" fill="#00c800"/>
<rect x="589" y="237" width="1" height="36" fill="#00ff00"/>
<rect x="596" y="237" width="1" height="36" fill="#00c800"/>
<rect x="612" y="237" width="1" height="36" fill="#00ff00"/>
<rect x="620" y="237" width="1" height="36" fill="#00c800"/>
<rect x="628" y="237" width="1" height="36" fill="#00ff00"/>
<rect x="636" y="237" width="1" height="36" fill="#00c800"/>
<rect x="643" y="237" width="1" height="36" fill="#00ff00"/>
<rect x="659" y="237" width="1" height="36" fill="#00c800"/>
<rect x="667" y="237" width="1" height="36" fill="#00ff00"/>
<rect x="149" y="273" width="4" height="35" fill="#8ce6f0"/>
<rect x="337" y="273" width="4" height="35" fill="#00d0f0"/>
<rect x="524" y="273" width="5" height="35" fill="#8ce6f0"/>
<rect x="135" y="308" width="2" height="35" fill="#00ff00"/>
<rect x="182" y="308" width="2" height="35" fill="#00c800"/>
<rect x="229" y="308" width="2" height="35" fill="#00ff00"/>
<rect x="276" y="308" width="2" height="35" fill="#00c800"/>
<rect x="323" y="308" width="2" height="35" fill="#00ff00"/>
<rect x="370" y="308" width="2" height="35" fill="#00c800"/>
<rect x="416" y="308" width="3" height="35" fill="#00ff00"/>
<rect x="463" y="308" width="3" height="35" fill="#00c800"/>
<rect x="510" y="308" width="3" height="35" fill="#00ff00"/>
<rect x="557" y="308" width="2" height="35" fill="#00c800"/>
<rect x="604" y="308" width="3" height="35" fill="#00ff00"/>
<rect x="651" y="308" width="2" height="35" fill="#00c800"/>
<rect x="129" y="343" width="1" height="35" fill="#ff0000"/>
<rect x="144" y="343" width="1" height="35" fill="#c80000"/>
<rect x="160" y="343" width="1" height="35" fill="#ff0000"/>
<rect x="176" y="343" width="1" height="35" fill="#c80000"/>
<rect x="191" y="343" width="1" height="35" fill="#ff0000"/>
<rect x="207" y="343" width="1" height="35" fill="#c80000"/>
<rect x="222" y="343" width="1" height="35" fill="#ff0000"/>
<rect x="238" y="343" width="1" height="35" fill="#c80000"/>
<rect x="254" y="343" width="1" height="35" fill="#ff0000"/>
<rect x="269" y="343" width="1" height="35" fill="#c80000"/>
<rect x="285" y="343" width="1" height="35" fill="#ff0000"/>
<rect x="301" y="343" width="1" height="35" fill="#c80000"/>
<rect x="316" y="343" width="1" height="35" fill="#ff0000"/>
<rect x="332" y="343" width="1" height="35" fill="#c80000"/>
<rect x="348" y="343" width="1" height="35" fill="#ff0000"/>
<rect x="363" y="343" width="1" height="35" fill="#c80000"/>
<rect x="379" y="343" width="1" height="35" fill="#ff0000"/>
<rect x="395" y="343" width="1" height="35" fill="#c80000"/>
<rect x="410" y="343" width="1" height="35" fill="#ff0000"/>
<rect x="426" y="343" width="1" height="35" fill="#c80000"/>
<rect x="442" y="343" width="1" height="35" fill="#ff0000"/>
<rect x="457" y="343" width="1" height="35" fill="#c80000"/>
<rect x="473" y="343" width="1" height="35" fill="#ff0000"/>
<rect x="488" y="343" width="1" height="35" fill="#c80000"/>
<rect x="504" y="343" width="1" height="35" fill="#ff0000"/>
<rect x="520" y="343" width="1" height="35" fill="#c80000"/>
<rect x="535" y="343" width="1" height="35" fill="#ff0000"/>
<rect x="551" y="343" width="1" height="35" fill="#c80000"/>
<rect x="567" y="343" width="1" height="35" fill="#ff0000"/>
<rect x="582" y="343" width="1" height="35" fill="#c80000"/>
<rect x="598" y="343" width="1" height="35" fill="#ff0000"/>
<rect x="614" y="343" width="1" height="35" fill="#c80000"/>
<rect x="629" y="343" width="1" height="35" fill="#ff0000"/>
<rect x="645" y="343" width="1" height="35" fill="#c80000"/>
<rect x="661" y="343" width="1" height="35" fill="#ff0000"/>
<rect x="124" y="378" width="1" height="35" fill="#00ff00"/>
<rect x="132" y="378" width="1" height="35" fill="#00c800"/>
<rect x="140" y="378" width="1" height="35" fill="#00ff00"/>
<rect x="147" y="378" width="1" height="35" fill="#00c800"/>
<rect x="155" y="378" width="1" height="35" fill="#00ff00"/>
<rect x="163" y="378" width="1" height="35" fill="#00c800"/>
<rect x="171" y="378" width="1" height="35" fill="#00ff00"/>
<rect x="179" y="378" width="1" height="35" fill="#00c800"/>
<rect x="187" y="378" width="1" height="35" fill="#00ff00"/>
<rect x="194" y="378" width="1" height="35" fill="#00c800"/>
<rect x="202" y="378" width="1" height="35" fill="#00ff00"/>
<rect x="210" y="378" width="1" height="35" fill="#00c800"/>
<rect x="218" y="378" width="1" height="35" fill="#00ff00"/>
<rect x="226" y="378" width="1" height="35" fill="#00c800"/>
<rect x="234" y="378" width="1" height="35" fill="#00ff00"/>
<rect x="241" y="378" width="1" height="35" fill="#00c800"/>
<rect x="249" y="378" width="1" height="35" fill="#00ff00"/>
<rect x="257" y="378" width="1" height="35" fill="#00c800"/>
<rect x="265" y="378" width="1" height="35" fill="#00ff00"/>
<rect x="273" y="378" width="1" height="35" fill="#00c800"/>
<rect x="280" y="378" width="1" height="35" fill="#00ff00"/>
<rect x="288" y="378" width="1" height="35" fill="#00c800"/>
<rect x="296" y="378" width="1" height="35" fill="#00ff00"/>
<rect x="304" y="378" width="1" height="35" fill="#00c800"/>
<rect x="312" y="378" width="1" height="35" fill="#00ff00"/>
<rect x="320" y="378" width="1" height="35" fill="#00c800"/>
<rect x="327" y="378" width="1" height="35" fill="#00ff00"/>
<rect x="335" y="378" width="1" height="35" fill="#00c800"/>
<rect x="343" y="378" width="1" height="35" fill="#00ff00"/>
<rect x="351" y="378" width="1" height="35" fill="#00c800"/>
<rect x="359" y="378" width="1" height="35" fill="#00ff00"/>
<rect x="366" y="378" width="1" height="35" fill="#00c800"/>
<rect x="374" y="378" width="1" height="35" fill="#00ff00"/>
<rect x="382" y="378" width="1" height="35" fill="#00c800"/>
<rect x="390" y="378" width="1" height="35" fill="#00ff00"/>
<rect x="398" y="378" width="1" height="35" fill="#00c800"/>
<rect x="406" y="378" width="1" height="35" fill="#00ff00"/>
<rect x="413" y="378" width="1" height="35" fill="#00c800"/>
<rect x="421" y="378" width="1" height="35" fill="#00ff00"/>
<rect x="429" y="378" width="1" height="35" fill="#00c800"/>
<rect x="437" y="378" width="1" height="35" fill="#00ff00"/>
<rect x="445" y="378" width="1" height="35" fill="#00c800"/>
<rect x="452" y="378" width="1" height="35" fill="#00ff00"/>
<rect x="460" y="378" width="1" height="35" fill="#00c800"/>
<rect x="468" y="378" width="1" height="35" fill="#00ff00"/>
<rect x="476" y="378" width="1" height="35" fill="#00c800"/>
<rect x="484" y="378" width="1" height="35" fill="#00ff00"/>
<rect x="492" y="378" width="1" height="35" fill="#00c800"/>
<rect x="499" y="378" width="1" height="35" fill="#00ff00"/>
<rect x="507" y="378" width="1" height="35" fill="#00c800"/>
<rect x="515" y="378" width="1" height="35" fill="#00ff00"/>
<rect x="523" y="378" width="1" height="35" fill="#00c800"/>
<rect x="531" y="378" width="1" height="35" fill="#00ff00"/>
<rect x="538" y="378" width="1" height="35" fill="#00c800"/>
<rect x="546" y="378" width="1" height="35" fill="#00ff00"/>
<rect x="554" y="378" width="1" height="35" fill="#00c800"/>
<rect x="562" y="378" width="1" height="35" fill="#00ff00"/>
<rect x="570" y="378" width="1" height="35" fill="#00c800"/>
<rect x="578" y="378" width="1" height="35" fill="#00ff00"/>
<rect x="585" y="378" width="1" height="35" fill="#00c800"/>
<rect x="593" y="378" width="1" height="35" fill="#00ff00"/>
<rect x="601" y="378" width="1" height="35" fill="#00c800"/>
<rect x="609" y="378" width="1" height="35" fill="#00ff00"/>
<rect x="617" y="378" width="1" height="35" fill="#00c800"/>
<rect x="625" y="378" width="1" height="35" fill="#00ff00"/>
<rect x="632" y="378" width="1" height="35" fill="#00c800"/>
<rect x="640" y="378" width="1" height="35" fill="#00ff00"/>
<rect x="648" y="378" width="1" height="35" fill="#00c800"/>
<rect x="656" y="378" width="1" height="35" fill="#00ff00"/>
<rect x="664" y="378" width="1" height="35" fill="#00c800"/>
<rect x="109" y="478" width="1" height="5" fill="#fff"/>
<rect x="110" y="478" width="1" height="5" fill="#fff"/>
<rect x="111" y="478" width="1" height="5" fill="#fff"/>
<rect x="112" y="478" width="1" height="5" fill="#fff"/>
<rect x="113" y="478" width="1" height="5" fill="#fff"/>
<rect x="114" y="478" width="1" height="5" fill="#fff"/>
<rect x="115" y="478" width="1" height="5" fill="#fff"/>
<rect x="116" y="478" width="1" height="5" fill="#fff"/>
<rect x="117" y="478" width="1" height="5" fill="#fff"/>
<rect x="118" y="478" width="1" height="5" fill="#fff"/>
<rect x="119" y="478" width="1" height="5" fill="#fff"/>
<rect x="120" y="477" width="1" height="6" fill="#fff"/>
<rect x="121" y="477" width="1" height="6" fill="#fff"/>
<rect x="122" y="480" width="1" height="3" fill="#fff"/>
<rect x="123" y="477" width="1" height="6" fill="#fff"/>
<rect x="124" y="477" width="1" height="6" fill="#fff"/>
<rect x="125" y="479" width="1" height="4" fill="#fff"/>
<rect x="126" y="478" width="1" height="5" fill="#fff"/>
<rect x="127" y="475" width="1" height="8" fill="#fff"/>
<rect x="128" y="474" width="1" height="9" fill="#fff"/>
<rect x="129" y="475" width="1" height="8" fill="#fff"/>
<rect x="130" y="479" width="1" height="4" fill="#fff"/>
<rect x="131" y="478" width="1" height="5" fill="#fff"/>
<rect x="132" y="479" width="1" height="4" fill="#fff"/>
<rect x="133" y="479" width="1" height="4" fill="#fff"/>
<rect x="134" y="480" width="1" height="3" fill="#fff"/>
<rect x="135" y="481" width="1" height="2" fill="#fff"/>
<rect x="136" y="482" width="1" height="1" fill="#fff"/>
<rect x="137" y="482" width="1" height="1" fill="#fff"/>
<rect x="138" y="479" width="1" height="4" fill="#fff"/>
<rect x="139" y="479" width="1" height="4" fill="#fff"/>
<rect x="140" y="479" width="1" height="4" fill="#fff"/>
<rect x="141" y="479" width="1" height="4" fill="#fff"/>
<rect x="142" y="479" width="1" height="4" fill="#fff"/>
<rect x="143" y="475" width="1" height="8" fill="#fff"/>
<rect x="144" y="475" width="1" height="8" fill="#fff"/>
<rect x="145" y="476" width="1" height="7" fill="#fff"/>
<rect x="146" y="478" width="1" height="5" fill="#fff"/>
<rect x="147" y="479" width="1" height="4" fill="#fff"/>
<rect x="148" y="481" width="1" height="2" fill="#fff"/>
<rect x="149" y="483" width="1" height="0" fill="#fff"/>
<rect x="150" y="483" width="1" height="0" fill="#fff"/>
<rect x="151" y="483" width="1" height="0" fill="#fff"/>
<rect x="152" y="483" width="1" height="0" fill="#fff"/>
<rect x="153" y="480" width="1" height="3" fill="#fff"/>
<rect x="154" y="478" width="1" height="5" fill="#fff"/>
<rect x="155" y="479" width="1" height="4" fill="#fff"/>
<rect x="156" y="482" width="1" height="1" fill="#fff"/>
<rect x="157" y="479" width="1" height="4" fill="#fff"/>
<rect x="158" y="477" width="1" height="6" fill="#fff"/>
<rect x="159" y="475" width="1" height="8" fill="#fff"/>
<rect x="160" y="476" width="1" height="7" fill="#fff"/>
<rect x="161" y="478" width="1" height="5" fill="#fff"/>
<rect x="162" y="479" width="1" height="4" fill="#fff"/>
<rect x="163" y="478" width="1" height="5" fill="#fff"/>
<rect x="164" y="480" width="1" height="3" fill="#fff"/>
<rect x="165" y="478" width="1" height="5" fill="#fff"/>
<rect x="166" y="477" width="1" height="6" fill="#fff"/>
<rect x="167" y="475" width="1" height="8" fill="#fff"/>
<rect x="168" y="478" width="1" height="5" fill="#fff"/>
<rect x="169" y="479" width="1" height="4" fill="#fff"/>
<rect x="170" y="477" width="1" height="6" fill="#fff"/>
<rect x="171" y="478" width="1" height="5" fill="#fff"/>
<rect x="172" y="477" width="1" height="6" fill="#fff"/>
<rect x="173" y="477" width="1" height="6" fill="#fff"/>
<rect x="174" y="477" width="1" height="6" fill="#fff"/>
<rect x="175" y="475" width="1" height="8" fill="#fff"/>
<rect x="176" y="475" width="1" height="8" fill="#fff"/>
<rect x="177" y="479" width="1" height="4" fill="#fff"/>
<rect x="178" y="478" width="1" height="5" fill="#fff"/>
<rect x="179" y="479" width="1" height="4" fill="#fff"/>
<rect x="180" y="479" width="1" height="4" fill="#fff"/>
<rect x="181" y="479" width="1" height="4" fill="#fff"/>
<rect x="182" y="480" width="1" height="3" fill="#fff"/>
<rect x="183" y="482" width="1" height="1" fill="#fff"/>
<rect x="184" y="482" width="1" height="1" fill="#fff"/>
<rect x="185" y="479" width="1" height="4" fill="#fff"/>
<rect x="186" y="479" width="1" height="4" fill="#fff"/>
<rect x="187" y="479" width="1" height="4" fill="#fff"/>
<rect x="188" y="479" width="1" height="4" fill="#fff"/>
<rect x="189" y="479" width="1" height="4" fill="#fff"/>
<rect x="190" y="475" width="1" height="8" fill="#fff"/>
<rect x="191" y="475" width="1" height="8" fill="#fff"/>
<rect x="192" y="475" width="1" height="8" fill="#fff"/>
<rect x="193" y="478" width="1" height="5" fill="#fff"/>
<rect x="194" y="479" width="1" height="4" fill="#fff"/>
<rect x="195" y="480" width="1" height="3" fill="#fff"/>
<rect x="196" y="480" width="1" height="3" fill="#fff"/>
<rect x="197" y="478" width="1" height="5" fill="#fff"/>
<rect x="198" y="475" width="1" height="8" fill="#fff"/>
<rect x="199" y="477" width="1" height="6" fill="#fff"/>
<rect x="200" y="481" width="1" height="2" fill="#fff"/>
<rect x="201" y="479" width="1" height="4" fill="#fff"/>
<rect x="202" y="482" width="1" height="1" fill="#fff"/>
<rect x="203" y="481" width="1" height="2" fill="#fff"/>
<rect x="204" y="479" width="1" height="4" fill="#fff"/>
<rect x="205" y="478" width="1" height="5" fill="#fff"/>
<rect x="206" y="475" width="1" height="8" fill="#fff"/>
<rect x="207" y="475" width="1" height="8" fill="#fff"/>
<rect x="208" y="478" width="1" height="5" fill="#fff"/>
<rect x="209" y="478" width="1" height="5" fill="#fff"/>
<rect x="210" y="479" width="1" height="4" fill="#fff"/>
<rect x="211" y="481" width="1" height="2" fill="#fff"/>
<rect x="212" y="479" width="1" height="4" fill="#fff"/>
<rect x="213" y="475" width="1" height="8" fill="#fff"/>
<rect x="214" y="477" width="1" height="6" fill="#fff"/>
<rect x="215" y="479" width="1" height="4" fill="#fff"/>
<rect x="216" y="478" width="1" height="5" fill="#fff"/>
<rect x="217" y="477" width="1" height="6" fill="#fff"/>
<rect x="218" y="477" width="1" height="6" fill="#fff"/>
<rect x="219" y="479" width="1" height="4" fill="#fff"/>
<rect x="220" y="478" width="1" height="5" fill="#fff"/>
<rect x="221" y="475" width="1" height="8" fill="#fff"/>
<rect x="222" y="475" width="1" height="8" fill="#fff"/>
<rect x="223" y="477" width="1" height="6" fill="#fff"/>
<rect x="224" y="479" width="1" height="4" fill="#fff"/>
<rect x="225" y="478" width="1" height="5" fill="#fff"/>
<rect x="226" y="479" width="1" height="4" fill="#fff"/>
<rect x="227" y="479" width="1" height="4" fill="#fff"/>
<rect x="228" y="480" width="1" height="3" fill="#fff"/>
<rect x="229" y="482" width="1" height="1" fill="#fff"/>
<rect x="230" y="482" width="1" height="1" fill="#fff"/>
<rect x="231" y="479" width="1" height="4" fill="#fff"/>
<rect x="232" y="480" width="1" height="3" fill="#fff"/>
<rect x="233" y="480" width="1" height="3" fill="#fff"/>
<rect x="234" y="479" width="1" height="4" fill="#fff"/>
<rect x="235" y="479" width="1" height="4" fill="#fff"/>
<rect x="236" y="479" width="1" height="4" fill="#fff"/>
<rect x="237" y="475" width="1" height="8" fill="#fff"/>
<rect x="238" y="475" width="1" height="8" fill="#fff"/>
<rect x="239" y="475" width="1" height="8" fill="#fff"/>
<rect x="240" y="477" width="1" height="6" fill="#fff"/>
<rect x="241" y="479" width="1" height="4" fill="#fff"/>
<rect x="242" y="480" width="1" height="3" fill="#fff"/>
<rect x="243" y="478" width="1" height="5" fill="#fff"/>
<rect x="244" y="477" width="1" height="6" fill="#fff"/>
<rect x="245" y="475" width="1" height="8" fill="#fff"/>
<rect x="246" y="478" width="1" height="5" fill="#fff"/>
<rect x="247" y="481" width="1" height="2" fill="#fff"/>
<rect x="248" y="479" width="1" height="4" fill="#fff"/>
<rect x="249" y="481" width="1" height="2" fill="#fff"/>
<rect x="250" y="482" width="1" height="1" fill="#fff"/>
<rect x="251" y="479" width="1" height="4" fill="#fff"/>
<rect x="252" y="477" width="1" height="6" fill="#fff"/>
<rect x="253" y="475" width="1" height="8" fill="#fff"/>
<rect x="254" y="475" width="1" height="8" fill="#fff"/>
<rect x="255" y="479" width="1" height="4" fill="#fff"/>
<rect x="256" y="478" width="1" height="5" fill="#fff"/>
<rect x="257" y="479" width="1" height="4" fill="#fff"/>
<rect x="258" y="479" width="1" height="4" fill="#fff"/>
<rect x="259" y="478" width="1" height="5" fill="#fff"/>
<rect x="260" y="476" width="1" height="7" fill="#fff"/>
<rect x="261" y="475" width="1" height="8" fill="#fff"/>
<rect x="262" y="479" width="1" height="4" fill="#fff"/>
<rect x="263" y="479" width="1" height="4" fill="#fff"/>
<rect x="264" y="477" width="1" height="6" fill="#fff"/>
<rect x="265" y="477" width="1" height="6" fill="#fff"/>
<rect x="266" y="479" width="1" height="4" fill="#fff"/>
<rect x="267" y="479" width="1" height="4" fill="#fff"/>
<rect x="268" y="475" width="1" height="8" fill="#fff"/>
<rect x="269" y="475" width="1" height="8" fill="#fff"/>
<rect x="270" y="475" width="1" height="8" fill="#fff"/>
<rect x="271" y="479" width="1" height="4" fill="#fff"/>
<rect x="272" y="478" width="1" height="5" fill="#fff"/>
<rect x="273" y="479" width="1" height="4" fill="#fff"/>
<rect x="274" y="479" width="1" height="4" fill="#fff"/>
<rect x="275" y="479" width="1" height="4" fill="#fff"/>
<rect x="276" y="480" width="1" height="3" fill="#fff"/>
<rect x="277" y="482" width="1" height="1" fill="#fff"/>
<rect x="278" y="482" width="1" height="1" fill="#fff"/>
<rect x="279" y="479" width="1" height="4" fill="#fff"/>
<rect x="280" y="480" width="1" height="3" fill="#fff"/>
<rect x="281" y="479" width="1" height="4" fill="#fff"/>
<rect x="282" y="479" width="1" height="4" fill="#fff"/>
<rect x="283" y="478" width="1" height="5" fill="#fff"/>
<rect x="284" y="474" width="1" height="9" fill="#fff"/>
<rect x="285" y="475" width="1" height="8" fill="#fff"/>
<rect x="286" y="476" width="1" height="7" fill="#fff"/>
<rect x="287" y="478" width="1" height="5" fill="#fff"/>
<rect x="288" y="482" width="1" height="1" fill="#fff"/>
<rect x="289" y="481" width="1" height="2" fill="#fff"/>
<rect x="290" y="479" width="1" height="4" fill="#fff"/>
<rect x="291" y="477" width="1" height="6" fill="#fff"/>
<rect x="292" y="475" width="1" height="8" fill="#fff"/>
<rect x="293" y="475" width="1" height="8" fill="#fff"/>
<rect x="294" y="478" width="1" height="5" fill="#fff"/>
<rect x="295" y="479" width="1" height="4" fill="#fff"/>
<rect x="296" y="480" width="1" height="3" fill="#fff"/>
<rect x="297" y="480" width="1" height="3" fill="#fff"/>
<rect x="298" y="479" width="1" height="4" fill="#fff"/>
<rect x="299" y="477" width="1" height="6" fill="#fff"/>
<rect x="300" y="475" width="1" height="8" fill="#fff"/>
<rect x="301" y="475" width="1" height="8" fill="#fff"/>
<rect x="302" y="478" width="1" height="5" fill="#fff"/>
<rect x="303" y="479" width="1" height="4" fill="#fff"/>
<rect x="304" y="479" width="1" height="4" fill="#fff"/>
<rect x="305" y="479" width="1" height="4" fill="#fff"/>
<rect x="306" y="477" width="1" height="6" fill="#fff"/>
<rect x="307" y="475" width="1" height="8" fill="#fff"/>
<rect x="308" y="475" width="1" height="8" fill="#fff"/>
<rect x="309" y="480" width="1" height="3" fill="#fff"/>
<rect x="310" y="478" width="1" height="5" fill="#fff"/>
<rect x="311" y="476" width="1" height="7" fill="#fff"/>
<rect x="312" y="476" width="1" height="7" fill="#fff"/>
<rect x="313" y="476" width="1" height="7" fill="#fff"/>
<rect x="314" y="476" width="1" height="7" fill="#fff"/>
<rect x="315" y="475" width="1" height="8" fill="#fff"/>
<rect x="316" y="475" width="1" height="8" fill="#fff"/>
<rect x="317" y="478" width="1" height="5" fill="#fff"/>
<rect x="318" y="478" width="1" height="5" fill="#fff"/>
<rect x="319" y="480" width="1" height="3" fill="#fff"/>
<rect x="320" y="480" width="1" height="3" fill="#fff"/>
<rect x="321" y="479" width="1" height="4" fill="#fff"/>
<rect x="322" y="479" width="1" height="4" fill="#fff"/>
<rect x="323" y="479" width="1" height="4" fill="#fff"/>
<rect x="324" y="482" width="1" height="1" fill="#fff"/>
<rect x="325" y="482" width="1" height="1" fill="#fff"/>
<rect x="326" y="479" width="1" height="4" fill="#fff"/>
<rect x="327" y="479" width="1" height="4" fill="#fff"/>
<rect x="328" y="480" width="1" height="3" fill="#fff"/>
<rect x="329" y="479" width="1" height="4" fill="#fff"/>
<rect x="330" y="478" width="1" height="5" fill="#fff"/>
<rect x="331" y="475" width="1" height="8" fill="#fff"/>
<rect x="332" y="475" width="1" height="8" fill="#fff"/>
<rect x="333" y="477" width="1" height="6" fill="#fff"/>
<rect x="334" y="479" width="1" height="4" fill="#fff"/>
<rect x="335" y="480" width="1" height="3" fill="#fff"/>
<rect x="336" y="482" width="1" height="1" fill="#fff"/>
<rect x="337" y="483" width="1" height="0" fill="#fff"/>
<rect x="338" y="483" width="1" height="0" fill="#fff"/>
<rect x="339" y="482" width="1" height="1" fill="#fff"/>
<rect x="340" y="481" width="1" height="2" fill="#fff"/>
<rect x="341" y="479" width="1" height="4" fill="#fff"/>
<rect x="342" y="478" width="1" height="5" fill="#fff"/>
<rect x="343" y="479" width="1" height="4" fill="#fff"/>
<rect x="344" y="482" width="1" height="1" fill="#fff"/>
<rect x="345" y="479" width="1" height="4" fill="#fff"/>
<rect x="346" y="477" width="1" height="6" fill="#fff"/>
<rect x="347" y="475" width="1" height="8" fill="#fff"/>
<rect x="348" y="475" width="1" height="8" fill="#fff"/>
<rect x="349" y="479" width="1" height="4" fill="#fff"/>
<rect x="350" y="478" width="1" height="5" fill="#fff"/>
<rect x="351" y="479" width="1" height="4" fill="#fff"/>
<rect x="352" y="479" width="1" height="4" fill="#fff"/>
<rect x="353" y="479" width="1" height="4" fill="#fff"/>
<rect x="354" y="475" width="1" height="8" fill="#fff"/>
<rect x="355" y="475" width="1" height="8" fill="#fff"/>
<rect x="356" y="480" width="1" height="3" fill="#fff"/>
<rect x="357" y="479" width="1" height="4" fill="#fff"/>
<rect x="358" y="477" width="1" height="6" fill="#fff"/>
<rect x="359" y="477" width="1" height="6" fill="#fff"/>
<rect x="360" y="479" width="1" height="4" fill="#fff"/>
<rect x="361" y="478" width="1" height="5" fill="#fff"/>
<rect x="362" y="475" width="1" height="8" fill="#fff"/>
<rect x="363" y="475" width="1" height="8" fill="#fff"/>
<rect x="364" y="478" width="1" height="5" fill="#fff"/>
<rect x="365" y="479" width="1" height="4" fill="#fff"/>
<rect x="366" y="480" width="1" height="3" fill="#fff"/>
<rect x="367" y="480" width="1" height="3" fill="#fff"/>
<rect x="368" y="479" width="1" height="4" fill="#fff"/>
<rect x="369" y="480" width="1" height="3" fill="#fff"/>
<rect x="370" y="482" width="1" height="1" fill="#fff"/>
<rect x="371" y="482" width="1" height="1" fill="#fff"/>
<rect x="372" y="480" width="1" height="3" fill="#fff"/>
<rect x="373" y="479" width="1" height="4" fill="#fff"/>
<rect x="374" y="480" width="1" height="3" fill="#fff"/>
<rect x="375" y="478" width="1" height="5" fill="#fff"/>
<rect x="376" y="477" width="1" height="6" fill="#fff"/>
<rect x="377" y="476" width="1" height="7" fill="#fff"/>
<rect x="378" y="475" width="1" height="8" fill="#fff"/>
<rect x="379" y="478" width="1" height="5" fill="#fff"/>
<rect x="380" y="479" width="1" height="4" fill="#fff"/>
<rect x="381" y="478" width="1" height="5" fill="#fff"/>
<rect x="382" y="479" width="1" height="4" fill="#fff"/>
<rect x="383" y="480" width="1" height="3" fill="#fff"/>
<rect x="384" y="479" width="1" height="4" fill="#fff"/>
<rect x="385" y="477" width="1" height="6" fill="#fff"/>
<rect x="386" y="475" width="1" height="8" fill="#fff"/>
<rect x="387" y="477" width="1" height="6" fill="#fff"/>
<rect x="388" y="479" width="1" height="4" fill="#fff"/>
<rect x="389" y="479" width="1" height="4" fill="#fff"/>
<rect x="390" y="479" width="1" height="4" fill="#fff"/>
<rect x="391" y="479" width="1" height="4" fill="#fff"/>
<rect x="392" y="479" width="1" height="4" fill="#fff"/>
<rect x="393" y="476" width="1" height="7" fill="#fff"/>
<rect x="394" y="475" width="1" height="8" fill="#fff"/>
<rect x="395" y="475" width="1" height="8" fill="#fff"/>
<rect x="396" y="479" width="1" height="4" fill="#fff"/>
<rect x="397" y="478" width="1" height="5" fill="#fff"/>
<rect x="398" y="479" width="1" height="4" fill="#fff"/>
<rect x="399" y="479" width="1" height="4" fill="#fff"/>
<rect x="400" y="479" width="1" height="4" fill="#fff"/>
<rect x="401" y="475" width="1" height="8" fill="#fff"/>
<rect x="402" y="476" width="1" height="7" fill="#fff"/>
<rect x="403" y="479" width="1" height="4" fill="#fff"/>
<rect x="404" y="480" width="1" height="3" fill="#fff"/>
<rect x="405" y="477" width="1" height="6" fill="#fff"/>
<rect x="406" y="477" width="1" height="6" fill="#fff"/>
<rect x="407" y="479" width="1" height="4" fill="#fff"/>
<rect x="408" y="479" width="1" height="4" fill="#fff"/>
<rect x="409" y="475" width="1" height="8" fill="#fff"/>
<rect x="410" y="475" width="1" height="8" fill="#fff"/>
<rect x="411" y="475" width="1" height="8" fill="#fff"/>
<rect x="412" y="478" width="1" height="5" fill="#fff"/>
<rect x="413" y="479" width="1" height="4" fill="#fff"/>
<rect x="414" y="481" width="1" height="2" fill="#fff"/>
<rect x="415" y="479" width="1" height="4" fill="#fff"/>
<rect x="416" y="480" width="1" height="3" fill="#fff"/>
<rect x="417" y="482" width="1" height="1" fill="#fff"/>
<rect x="418" y="480" width="1" height="3" fill="#fff"/>
<rect x="419" y="479" width="1" height="4" fill="#fff"/>
<rect x="420" y="482" width="1" height="1" fill="#fff"/>
<rect x="421" y="479" width="1" height="4" fill="#fff"/>
<rect x="422" y="479" width="1" height="4" fill="#fff"/>
<rect x="423" y="479" width="1" height="4" fill="#fff"/>
<rect x="424" y="477" width="1" height="6" fill="#fff"/>
<rect x="425" y="475" width="1" height="8" fill="#fff"/>
<rect x="426" y="475" width="1" height="8" fill="#fff"/>
<rect x="427" y="477" width="1" height="6" fill="#fff"/>
<rect x="428" y="479" width="1" height="4" fill="#fff"/>
<rect x="429" y="478" width="1" height="5" fill="#fff"/>
<rect x="430" y="480" width="1" height="3" fill="#fff"/>
<rect x="431" y="479" width="1" height="4" fill="#fff"/>
<rect x="432" y="477" width="1" height="6" fill="#fff"/>
<rect x="433" y="475" width="1" height="8" fill="#fff"/>
<rect x="434" y="476" width="1" height="7" fill="#fff"/>
<rect x="435" y="479" width="1" height="4" fill="#fff"/>
<rect x="436" y="479" width="1" height="4" fill="#fff"/>
<rect x="437" y="479" width="1" height="4" fill="#fff"/>
<rect x="438" y="479" width="1" height="4" fill="#fff"/>
<rect x="439" y="479" width="1" height="4" fill="#fff"/>
<rect x="440" y="475" width="1" height="8" fill="#fff"/>
<rect x="441" y="474" width="1" height="9" fill="#fff"/>
<rect x="442" y="475" width="1" height="8" fill="#fff"/>
<rect x="443" y="479" width="1" height="4" fill="#fff"/>
<rect x="444" y="478" width="1" height="5" fill="#fff"/>
<rect x="445" y="479" width="1" height="4" fill="#fff"/>
<rect x="446" y="479" width="1" height="4" fill="#fff"/>
<rect x="447" y="475" width="1" height="8" fill="#fff"/>
<rect x="448" y="475" width="1" height="8" fill="#fff"/>
<rect x="449" y="479" width="1" height="4" fill="#fff"/>
<rect x="450" y="480" width="1" height="3" fill="#fff"/>
<rect x="451" y="477" width="1" height="6" fill="#fff"/>
<rect x="452" y="478" width="1" height="5" fill="#fff"/>
<rect x="453" y="478" width="1" height="5" fill="#fff"/>
<rect x="454" y="478" width="1" height="5" fill="#fff"/>
<rect x="455" y="479" width="1" height="4" fill="#fff"/>
<rect x="456" y="475" width="1" height="8" fill="#fff"/>
<rect x="457" y="475" width="1" height="8" fill="#fff"/>
<rect x="458" y="477" width="1" height="6" fill="#fff"/>
<rect x="459" y="479" width="1" height="4" fill="#fff"/>
<rect x="460" y="481" width="1" height="2" fill="#fff"/>
<rect x="461" y="482" width="1" height="1" fill="#fff"/>
<rect x="462" y="479" width="1" height="4" fill="#fff"/>
<rect x="463" y="481" width="1" height="2" fill="#fff"/>
<rect x="464" y="482" width="1" height="1" fill="#fff"/>
<rect x="465" y="480" width="1" height="3" fill="#fff"/>
<rect x="466" y="482" width="1" height="1" fill="#fff"/>
<rect x="467" y="479" width="1" height="4" fill="#fff"/>
<rect x="468" y="482" width="1" height="1" fill="#fff"/>
<rect x="469" y="482" width="1" height="1" fill="#fff"/>
<rect x="470" y="479" width="1" height="4" fill="#fff"/>
<rect x="471" y="477" width="1" height="6" fill="#fff"/>
<rect x="472" y="475" width="1" height="8" fill="#fff"/>
<rect x="473" y="475" width="1" height="8" fill="#fff"/>
<rect x="474" y="479" width="1" height="4" fill="#fff"/>
<rect x="475" y="478" width="1" height="5" fill="#fff"/>
<rect x="476" y="479" width="1" height="4" fill="#fff"/>
<rect x="477" y="479" width="1" height="4" fill="#fff"/>
<rect x="478" y="476" width="1" height="7" fill="#fff"/>
<rect x="479" y="475" width="1" height="8" fill="#fff"/>
<rect x="480" y="476" width="1" height="7" fill="#fff"/>
<rect x="481" y="479" width="1" height="4" fill="#fff"/>
<rect x="482" y="479" width="1" height="4" fill="#fff"/>
<rect x="483" y="479" width="1" height="4" fill="#fff"/>
<rect x="484" y="479" width="1" height="4" fill="#fff"/>
<rect x="485" y="479" width="1" height="4" fill="#fff"/>
<rect x="486" y="479" width="1" height="4" fill="#fff"/>
<rect x="487" y="475" width="1" height="8" fill="#fff"/>
<rect x="488" y="475" width="1" height="8" fill="#fff"/>
<rect x="489" y="475" width="1" height="8" fill="#fff"/>
<rect x="490" y="478" width="1" height="5" fill="#fff"/>
<rect x="491" y="479" width="1" height="4" fill="#fff"/>
<rect x="492" y="478" width="1" height="5" fill="#fff"/>
<rect x="493" y="479" width="1" height="4" fill="#fff"/>
<rect x="494" y="479" width="1" height="4" fill="#fff"/>
<rect x="495" y="475" width="1" height="8" fill="#fff"/>
<rect x="496" y="476" width="1" height="7" fill="#fff"/>
<rect x="497" y="479" width="1" height="4" fill="#fff"/>
<rect x="498" y="477" width="1" height="6" fill="#fff"/>
<rect x="499" y="479" width="1" height="4" fill="#fff"/>
<rect x="500" y="479" width="1" height="4" fill="#fff"/>
<rect x="501" y="479" width="1" height="4" fill="#fff"/>
<rect x="502" y="476" width="1" height="7" fill="#fff"/>
<rect x="503" y="475" width="1" height="8" fill="#fff"/>
<rect x="504" y="476" width="1" height="7" fill="#fff"/>
<rect x="505" y="479" width="1" height="4" fill="#fff"/>
<rect x="506" y="480" width="1" height="3" fill="#fff"/>
<rect x="507" y="480" width="1" height="3" fill="#fff"/>
<rect x="508" y="482" width="1" height="1" fill="#fff"/>
<rect x="509" y="479" width="1" height="4" fill="#fff"/>
<rect x="510" y="481" width="1" height="2" fill="#fff"/>
<rect x="511" y="482" width="1" height="1" fill="#fff"/>
<rect x="512" y="482" width="1" height="1" fill="#fff"/>
<rect x="513" y="482" width="1" height="1" fill="#fff"/>
<rect x="514" y="479" width="1" height="4" fill="#fff"/>
<rect x="515" y="482" width="1" height="1" fill="#fff"/>
<rect x="516" y="480" width="1" height="3" fill="#fff"/>
<rect x="517" y="478" width="1" height="5" fill="#fff"/>
<rect x="518" y="476" width="1" height="7" fill="#fff"/>
<rect x="519" y="475" width="1" height="8" fill="#fff"/>
<rect x="520" y="478" width="1" height="5" fill="#fff"/>
<rect x="521" y="479" width="1" height="4" fill="#fff"/>
<rect x="522" y="479" width="1" height="4" fill="#fff"/>
<rect x="523" y="480" width="1" height="3" fill="#fff"/>
<rect x="524" y="479" width="1" height="4" fill="#fff"/>
<rect x="525" y="483" width="1" height="0" fill="#fff"/>
<rect x="526" y="483" width="1" height="0" fill="#fff"/>
<rect x="527" y="483" width="1" height="0" fill="#fff"/>
<rect x="528" y="481" width="1" height="2" fill="#fff"/>
<rect x="529" y="479" width="1" height="4" fill="#fff"/>
<rect x="530" y="478" width="1" height="5" fill="#fff"/>
<rect x="531" y="479" width="1" height="4" fill="#fff"/>
<rect x="532" y="479" width="1" height="4" fill="#fff"/>
<rect x="533" y="479" width="1" height="4" fill="#fff"/>
<rect x="534" y="475" width="1" height="8" fill="#fff"/>
<rect x="535" y="475" width="1" height="8" fill="#fff"/>
<rect x="536" y="475" width="1" height="8" fill="#fff"/>
<rect x="537" y="478" width="1" height="5" fill="#fff"/>
<rect x="538" y="479" width="1" height="4" fill="#fff"/>
<rect x="539" y="479" width="1" height="4" fill="#fff"/>
<rect x="540" y="479" width="1" height="4" fill="#fff"/>
<rect x="541" y="479" width="1" height="4" fill="#fff"/>
<rect x="542" y="475" width="1" height="8" fill="#fff"/>
<rect x="543" y="476" width="1" height="7" fill="#fff"/>
<rect x="544" y="479" width="1" height="4" fill="#fff"/>
<rect x="545" y="480" width="1" height="3" fill="#fff"/>
<rect x="546" y="477" width="1" height="6" fill="#fff"/>
<rect x="547" y="479" width="1" height="4" fill="#fff"/>
<rect x="548" y="479" width="1" height="4" fill="#fff"/>
<rect x="549" y="476" width="1" height="7" fill="#fff"/>
<rect x="550" y="475" width="1" height="8" fill="#fff"/>
<rect x="551" y="475" width="1" height="8" fill="#fff"/>
<rect x="552" y="477" width="1" height="6" fill="#fff"/>
<rect x="553" y="479" width="1" height="4" fill="#fff"/>
<rect x="554" y="480" width="1" height="3" fill="#fff"/>
<rect x="555" y="482" width="1" height="1" fill="#fff"/>
<rect x="556" y="479" width="1" height="4" fill="#fff"/>
<rect x="557" y="479" width="1" height="4" fill="#fff"/>
<rect x="558" y="482" width="1" height="1" fill="#fff"/>
<rect x="559" y="479" width="1" height="4" fill="#fff"/>
<rect x="560" y="479" width="1" height="4" fill="#fff"/>
<rect x="561" y="482" width="1" height="1" fill="#fff"/>
<rect x="562" y="480" width="1" height="3" fill="#fff"/>
<rect x="563" y="479" width="1" height="4" fill="#fff"/>
<rect x="564" y="478" width="1" height="5" fill="#fff"/>
<rect x="565" y="475" width="1" height="8" fill="#fff"/>
<rect x="566" y="475" width="1" height="8" fill="#fff"/>
<rect x="567" y="479" width="1" height="4" fill="#fff"/>
<rect x="568" y="479" width="1" height="4" fill="#fff"/>
<rect x="569" y="478" width="1" height="5" fill="#fff"/>
<rect x="570" y="479" width="1" height="4" fill="#fff"/>
<rect x="571" y="479" width="1" height="4" fill="#fff"/>
<rect x="572" y="479" width="1" height="4" fill="#fff"/>
<rect x="573" y="475" width="1" height="8" fill="#fff"/>
<rect x="574" y="475" width="1" height="8" fill="#fff"/>
<rect x="575" y="479" width="1" height="4" fill="#fff"/>
<rect x="576" y="479" width="1" height="4" fill="#fff"/>
<rect x="577" y="479" width="1" height="4" fill="#fff"/>
<rect x="578" y="479" width="1" height="4" fill="#fff"/>
<rect x="579" y="479" width="1" height="4" fill="#fff"/>
<rect x="580" y="479" width="1" height="4" fill="#fff"/>
<rect x="581" y="475" width="1" height="8" fill="#fff"/>
<rect x="582" y="475" width="1" height="8" fill="#fff"/>
<rect x="583" y="477" width="1" height="6" fill="#fff"/>
<rect x="584" y="479" width="1" height="4" fill="#fff"/>
<rect x="585" y="478" width="1" height="5" fill="#fff"/>
<rect x="586" y="480" width="1" height="3" fill="#fff"/>
<rect x="587" y="479" width="1" height="4" fill="#fff"/>
<rect x="588" y="478" width="1" height="5" fill="#fff"/>
<rect x="589" y="478" width="1" height="5" fill="#fff"/>
<rect x="590" y="475" width="1" height="8" fill="#fff"/>
<rect x="591" y="479" width="1" height="4" fill="#fff"/>
<rect x="592" y="479" width="1" height="4" fill="#fff"/>
<rect x="593" y="476" width="1" height="7" fill="#fff"/>
<rect x="594" y="478" width="1" height="5" fill="#fff"/>
<rect x="595" y="479" width="1" height="4" fill="#fff"/>
<rect x="596" y="478" width="1" height="5" fill="#fff"/>
<rect x="597" y="475" width="1" height="8" fill="#fff"/>
<rect x="598" y="476" width="1" height="7" fill="#fff"/>
<rect x="599" y="479" width="1" height="4" fill="#fff"/>
<rect x="600" y="478" width="1" height="5" fill="#fff"/>
<rect x="601" y="479" width="1" height="4" fill="#fff"/>
<rect x="602" y="482" width="1" height="1" fill="#fff"/>
<rect x="603" y="482" width="1" height="1" fill="#fff"/>
<rect x="604" y="479" width="1" height="4" fill="#fff"/>
<rect x="605" y="479" width="1" height="4" fill="#fff"/>
<rect x="606" y="479" width="1" height="4" fill="#fff"/>
<rect x="607" y="479" width="1" height="4" fill="#fff"/>
<rect x="608" y="479" width="1" height="4" fill="#fff"/>
<rect x="609" y="478" width="1" height="5" fill="#fff"/>
<rect x="610" y="478" width="1" height="5" fill="#fff"/>
<rect x="611" y="478" width="1" height="5" fill="#fff"/>
<rect x="612" y="476" width="1" height="7" fill="#fff"/>
<rect x="613" y="475" width="1" height="8" fill="#fff"/>
<rect x="614" y="475" width="1" height="8" fill="#fff"/>
<rect x="615" y="479" width="1" height="4" fill="#fff"/>
<rect x="616" y="478" width="1" height="5" fill="#fff"/>
<rect x="617" y="479" width="1" height="4" fill="#fff"/>
<rect x="618" y="479" width="1" height="4" fill="#fff"/>
<rect x="619" y="479" width="1" height="4" fill="#fff"/>
<rect x="620" y="475" width="1" height="8" fill="#fff"/>
<rect x="621" y="475" width="1" height="8" fill="#fff"/>
<rect x="622" y="479" width="1" height="4" fill="#fff"/>
<rect x="623" y="479" width="1" height="4" fill="#fff"/>
<rect x="624" y="479" width="1" height="4" fill="#fff"/>
<rect x="625" y="479" width="1" height="4" fill="#fff"/>
<rect x="626" y="479" width="1" height="4" fill="#fff"/>
<rect x="627" y="479" width="1" height="4" fill="#fff"/>
<rect x="628" y="475" width="1" height="8" fill="#fff"/>
<rect x="629" y="475" width="1" height="8" fill="#fff"/>
<rect x="630" y="477" width="1" height="6" fill="#fff"/>
<rect x="631" y="479" width="1" height="4" fill="#fff"/>
<rect x="632" y="479" width="1" height="4" fill="#fff"/>
<rect x="633" y="480" width="1" height="3" fill="#fff"/>
<rect x="634" y="479" width="1" height="4" fill="#fff"/>
<rect x="635" y="479" width="1" height="4" fill="#fff"/>
<rect x="636" y="475" width="1" height="8" fill="#fff"/>
<rect x="637" y="477" width="1" height="6" fill="#fff"/>
<rect x="638" y="479" width="1" height="4" fill="#fff"/>
<rect x="639" y="479" width="1" height="4" fill="#fff"/>
<rect x="640" y="477" width="1" height="6" fill="#fff"/>
<rect x="641" y="479" width="1" height="4" fill="#fff"/>
<rect x="642" y="478" width="1" height="5" fill="#fff"/>
<rect x="643" y="476" width="1" height="7" fill="#fff"/>
<rect x="644" y="475" width="1" height="8" fill="#fff"/>
<rect x="645" y="477" width="1" height="6" fill="#fff"/>
<rect x="646" y="479" width="1" height="4" fill="#fff"/>
<rect x="647" y="479" width="1" height="4" fill="#fff"/>
<rect x="648" y="480" width="1" height="3" fill="#fff"/>
<rect x="649" y="479" width="1" height="4" fill="#fff"/>
<rect x="650" y="480" width="1" height="3" fill="#fff"/>
<rect x="651" y="481" width="1" height="2" fill="#fff"/>
<rect x="652" y="482" width="1" height="1" fill="#fff"/>
<rect x="653" y="479" width="1" height="4" fill="#fff"/>
<rect x="654" y="479" width="1" height="4" fill="#fff"/>
<rect x="655" y="479" width="1" height="4" fill="#fff"/>
<rect x="656" y="479" width="1" height="4" fill="#fff"/>
<rect x="657" y="480" width="1" height="3" fill="#fff"/>
<rect x="658" y="479" width="1" height="4" fill="#fff"/>
<rect x="659" y="475" width="1" height="8" fill="#fff"/>
<rect x="660" y="475" width="1" height="8" fill="#fff"/>
<rect x="661" y="475" width="1" height="8" fill="#fff"/>
<rect x="662" y="478" width="1" height="5" fill="#fff"/>
<rect x="663" y="480" width="1" height="3" fill="#fff"/>
<rect x="664" y="479" width="1" height="4" fill="#fff"/>
<rect x="665" y="478" width="1" height="5" fill="#fff"/>
<rect x="666" y="479" width="1" height="4" fill="#fff"/>
<rect x="667" y="475" width="1" height="8" fill="#fff"/>
<rect x="668" y="475" width="1" height="8" fill="#fff"/>
<rect x="669" y="479" width="1" height="4" fill="#fff"/>
<rect x="670" y="479" width="1" height="4" fill="#fff"/>
<rect x="132" y="483" width="1" height="1" fill="#ff0000"/>
<rect x="140" y="483" width="1" height="1" fill="#ff0000"/>
<rect x="148" y="483" width="1" height="1" fill="#ff0000"/>
<rect x="156" y="483" width="1" height="1" fill="#ff0000"/>
<rect x="164" y="483" width="1" height="1" fill="#ff0000"/>
<rect x="179" y="483" width="1" height="1" fill="#ff0000"/>
<rect x="187" y="483" width="1" height="1" fill="#ff0000"/>
<rect x="195" y="483" width="1" height="1" fill="#ff0000"/>
<rect x="200" y="483" width="1" height="1" fill="#ff0000"/>
<rect x="203" y="483" width="1" height="1" fill="#ff0000"/>
<rect x="211" y="483" width="1" height="1" fill="#ff0000"/>
<rect x="226" y="483" width="1" height="1" fill="#ff0000"/>
<rect x="234" y="483" width="1" height="1" fill="#ff0000"/>
<rect x="242" y="483" width="1" height="1" fill="#ff0000"/>
<rect x="246" y="483" width="1" height="1" fill="#ff0000"/>
<rect x="250" y="483" width="1" height="1" fill="#ff0000"/>
<rect x="258" y="483" width="1" height="1" fill="#ff0000"/>
<rect x="273" y="483" width="1" height="1" fill="#ff0000"/>
<rect x="281" y="483" width="1" height="1" fill="#ff0000"/>
<rect x="289" y="483" width="1" height="1" fill="#ff0000"/>
<rect x="293" y="483" width="1" height="1" fill="#ff0000"/>
<rect x="297" y="483" width="1" height="1" fill="#ff0000"/>
<rect x="304" y="483" width="1" height="1" fill="#ff0000"/>
<rect x="320" y="483" width="1" height="1" fill="#ff0000"/>
<rect x="328" y="483" width="1" height="1" fill="#ff0000"/>
<rect x="336" y="483" width="1" height="1" fill="#ff0000"/>
<rect x="344" y="483" width="1" height="1" fill="#ff0000"/>
<rect x="351" y="483" width="1" height="1" fill="#ff0000"/>
<rect x="367" y="483" width="1" height="1" fill="#ff0000"/>
<rect x="375" y="483" width="1" height="1" fill="#ff0000"/>
<rect x="383" y="483" width="1" height="1" fill="#ff0000"/>
<rect x="387" y="483" width="1" height="1" fill="#ff0000"/>
<rect x="391" y="483" width="1" height="1" fill="#ff0000"/>
<rect x="398" y="483" width="1" height="1" fill="#ff0000"/>
<rect x="414" y="483" width="1" height="1" fill="#ff0000"/>
<rect x="422" y="483" width="1" height="1" fill="#ff0000"/>
<rect x="430" y="483" width="1" height="1" fill="#ff0000"/>
<rect x="434" y="483" width="1" height="1" fill="#ff0000"/>
<rect x="437" y="483" width="1" height="1" fill="#ff0000"/>
<rect x="445" y="483" width="1" height="1" fill="#ff0000"/>
<rect x="461" y="483" width="1" height="1" fill="#ff0000"/>
<rect x="469" y="483" width="1" height="1" fill="#ff0000"/>
<rect x="477" y="483" width="1" height="1" fill="#ff0000"/>
<rect x="481" y="483" width="1" height="1" fill="#ff0000"/>
<rect x="484" y="483" width="1" height="1" fill="#ff0000"/>
<rect x="492" y="483" width="1" height="1" fill="#ff0000"/>
<rect x="508" y="483" width="1" height="1" fill="#ff0000"/>
<rect x="516" y="483" width="1" height="1" fill="#ff0000"/>
<rect x="524" y="483" width="1" height="1" fill="#ff0000"/>
<rect x="531" y="483" width="1" height="1" fill="#ff0000"/>
<rect x="539" y="483" width="1" height="1" fill="#ff0000"/>
<rect x="555" y="483" width="1" height="1" fill="#ff0000"/>
<rect x="563" y="483" width="1" height="1" fill="#ff0000"/>
<rect x="570" y="483" width="1" height="1" fill="#ff0000"/>
<rect x="575" y="483" width="1" height="1" fill="#ff0000"/>
<rect x="578" y="483" width="1" height="1" fill="#ff0000"/>
<rect x="586" y="483" width="1" height="1" fill="#ff0000"/>
<rect x="602" y="483" width="1" height="1" fill="#ff0000"/>
<rect x="610" y="483" width="1" height="1" fill="#ff0000"/>
<rect x="617" y="483" width="1" height="1" fill="#ff0000"/>
<rect x="622" y="483" width="1" height="1" fill="#ff0000"/>
<rect x="625" y="483" width="1" height="1" fill="#ff0000"/>
<rect x="633" y="483" width="1" height="1" fill="#ff0000"/>
<rect x="649" y="483" width="1" height="1" fill="#ff0000"/>
<rect x="656" y="483" width="1" height="1" fill="#ff0000"/>
<rect x="664" y="483" width="1" height="1" fill="#ff0000"/>
<rect x="669" y="483" width="1" height="1" fill="#ff0000"/>
</g>
<g fill="none" stroke-width="1" stroke-linecap="square" stroke-linejoin="miter" shape-rendering="crispEdges">
<path d="M112.87 8.17 L112.87 7.83 L113.24 7.17 L113.61 6.83 L114.35 6.50 L115.82 6.50 L116.56 6.83 L116.93 7.17 L117.30 7.83 L117.30 8.50 L116.93 9.17 L116.19 10.17 L112.50 13.50 L117.67 13.50 M122.10 6.50 L120.99 6.83 L120.25 7.83 L119.88 9.50 L119.88 10.50 L120.25 12.17 L120.99 13.17 L122.10 13.50 L122.83 13.50 L123.94 13.17 L124.68 12.17 L125.05 10.50 L125.05 9.50 L124.68 7.83 L123.94 6.83 L122.83 6.50 L122.10 6.50 M128.00 8.83 L127.63 9.17 L128.00 9.50 L128.37 9.17 L128.00 8.83 M128.00 12.83 L127.63 13.17 L128.00 13.50 L128.37 13.17 L128.00 12.83 M133.17 6.50 L132.06 6.83 L131.32 7.83 L130.95 9.50 L130.95 10.50 L131.32 12.17 L132.06 13.17 L133.17 13.50 L133.90 13.50 L135.01 13.17 L135.75 12.17 L136.12 10.50 L136.12 9.50 L135.75 7.83 L135.01 6.83 L133.90 6.50 L133.17 6.50 M140.55 6.50 L139.44 6.83 L138.70 7.83 L138.33 9.50 L138.33 10.50 L138.70 12.17 L139.44 13.17 L140.55 13.50 L141.29 13.50 L142.39 13.17 L143.13 12.17 L143.50 10.50 L143.50 9.50 L143.13 7.83 L142.39 6.83 L141.29 6.50 L140.55 6.50" stroke="#fff"/>
<path d="M269.50 7.83 L270.27 7.50 L271.41 6.50 L271.41 13.50 M280.98 7.50 L280.60 6.83 L279.45 6.50 L278.69 6.50 L277.54 6.83 L276.77 7.83 L276.39 9.50 L276.39 11.17 L276.77 12.50 L277.54 13.17 L278.69 13.50 L279.07 13.50 L280.22 13.17 L280.98 12.50 L281.36 11.50 L281.36 11.17 L280.98 10.17 L280.22 9.50 L279.07 9.17 L278.69 9.17 L277.54 9.50 L276.77 10.17 L276.39 11.17 M284.43 8.83 L284.04 9.17 L284.43 9.50 L284.81 9.17 L284.43 8.83 M284.43 12.83 L284.04 13.17 L284.43 13.50 L284.81 13.17 L284.43 12.83 M289.78 6.50 L288.64 6.83 L287.87 7.83 L287.49 9.50 L287.49 10.50 L287.87 12.17 L288.64 13.17 L289.78 13.50 L290.55 13.50 L291.70 13.17 L292.46 12.17 L292.85 10.50 L292.85 9.50 L292.46 7.83 L291.70 6.83 L290.55 6.50 L289.78 6.50 M297.44 6.50 L296.29 6.83 L295.52 7.83 L295.14 9.50 L295.14 10.50 L295.52 12.17 L296.29 13.17 L297.44 13.50 L298.20 13.50 L299.35 13.17 L300.12 12.17 L300.50 10.50 L300.50 9.50 L300.12 7.83 L299.35 6.83 L298.20 6.50 L297.44 6.50" stroke="#fff"/>
<path d="M425.50 7.83 L426.27 7.50 L427.41 6.50 L427.41 13.50 M432.39 8.17 L432.39 7.83 L432.77 7.17 L433.15 6.83 L433.92 6.50 L435.45 6.50 L436.22 6.83 L436.60 7.17 L436.98 7.83 L436.98 8.50 L436.60 9.17 L435.83 10.17 L432.01 13.50 L437.36 13.50 M440.43 8.83 L440.04 9.17 L440.43 9.50 L440.81 9.17 L440.43 8.83 M440.43 12.83 L440.04 13.17 L440.43 13.50 L440.81 13.17 L440.43 12.83 M445.78 6.50 L444.64 6.83 L443.87 7.83 L443.49 9.50 L443.49 10.50 L443.87 12.17 L444.64 13.17 L445.78 13.50 L446.55 13.50 L447.70 13.17 L448.46 12.17 L448.85 10.50 L448.85 9.50 L448.46 7.83 L447.70 6.83 L446.55 6.50 L445.78 6.50 M453.44 6.50 L452.29 6.83 L451.52 7.83 L451.14 9.50 L451.14 10.50 L451.52 12.17 L452.29 13.17 L453.44 13.50 L454.20 13.50 L455.35 13.17 L456.12 12.17 L456.50 10.50 L456.50 9.50 L456.12 7.83 L455.35 6.83 L454.20 6.50 L453.44 6.50" stroke="#fff"/>
<path d="M583.79 6.50 L582.64 6.83 L581.88 7.83 L581.50 9.50 L581.50 10.50 L581.88 12.17 L582.64 13.17 L583.79 13.50 L584.55 13.50 L585.69 13.17 L586.45 12.17 L586.83 10.50 L586.83 9.50 L586.45 7.83 L585.69 6.83 L584.55 6.50 L583.79 6.50 M591.02 6.50 L589.88 6.83 L589.50 7.50 L589.50 8.17 L589.88 8.83 L590.64 9.17 L592.17 9.50 L593.31 9.83 L594.07 10.50 L594.45 11.17 L594.45 12.17 L594.07 12.83 L593.69 13.17 L592.55 13.50 L591.02 13.50 L589.88 13.17 L589.50 12.83 L589.12 12.17 L589.12 11.17 L589.50 10.50 L590.26 9.83 L591.40 9.50 L592.93 9.17 L593.69 8.83 L594.07 8.17 L594.07 7.50 L593.69 6.83 L592.55 6.50 L591.02 6.50 M597.50 8.83 L597.12 9.17 L597.50 9.50 L597.88 9.17 L597.50 8.83 M597.50 12.83 L597.12 13.17 L597.50 13.50 L597.88 13.17 L597.50 12.83 M602.83 6.50 L601.69 6.83 L600.93 7.83 L600.55 9.50 L600.55 10.50 L600.93 12.17 L601.69 13.17 L602.83 13.50 L603.60 13.50 L604.74 13.17 L605.50 12.17 L605.88 10.50 L605.88 9.50 L605.50 7.83 L604.74 6.83 L603.60 6.50 L602.83 6.50 M610.45 6.50 L609.31 6.83 L608.55 7.83 L608.17 9.50 L608.17 10.50 L608.55 12.17 L609.31 13.17 L610.45 13.50 L611.21 13.50 L612.36 13.17 L613.12 12.17 L613.50 10.50 L613.50 9.50 L613.12 7.83 L612.36 6.83 L611.21 6.50 L610.45 6.50" stroke="#fff"/>
<path d="M112.87 496.17 L112.87 495.83 L113.24 495.17 L113.61 494.83 L114.35 494.50 L115.82 494.50 L116.56 494.83 L116.93 495.17 L117.30 495.83 L117.30 496.50 L116.93 497.17 L116.19 498.17 L112.50 501.50 L117.67 501.50 M122.10 494.50 L120.99 494.83 L120.25 495.83 L119.88 497.50 L119.88 498.50 L120.25 500.17 L120.99 501.17 L122.10 501.50 L122.83 501.50 L123.94 501.17 L124.68 500.17 L125.05 498.50 L125.05 497.50 L124.68 495.83 L123.94 494.83 L122.83 494.50 L122.10 494.50 M128.00 496.83 L127.63 497.17 L128.00 497.50 L128.37 497.17 L128.00 496.83 M128.00 500.83 L127.63 501.17 L128.00 501.50 L128.37 501.17 L128.00 500.83 M133.17 494.50 L132.06 494.83 L131.32 495.83 L130.95 497.50 L130.95 498.50 L131.32 500.17 L132.06 501.17 L133.17 501.50 L133.90 501.50 L135.01 501.17 L135.75 500.17 L136.12 498.50 L136.12 497.50 L135.75 495.83 L135.01 494.83 L133.90 494.50 L133.17 494.50 M140.55 494.50 L139.44 494.83 L138.70 495.83 L138.33 497.50 L138.33 498.50 L138.70 500.17 L139.44 501.17 L140.55 501.50 L141.29 501.50 L142.39 501.17 L143.13 500.17 L143.50 498.50 L143.50 497.50 L143.13 495.83 L142.39 494.83 L141.29 494.50 L140.55 494.50" stroke="#fff"/>
<path d="M269.50 495.83 L270.27 495.50 L271.41 494.50 L271.41 501.50 M280.98 495.50 L280.60 494.83 L279.45 494.50 L278.69 494.50 L277.54 494.83 L276.77 495.83 L276.39 497.50 L276.39 499.17 L276.77 500.50 L277.54 501.17 L278.69 501.50 L279.07 501.50 L280.22 501.17 L280.98 500.50 L281.36 499.50 L281.36 499.17 L280.98 498.17 L280.22 497.50 L279.07 497.17 L278.69 497.17 L277.54 497.50 L276.77 498.17 L276.39 499.17 M284.43 496.83 L284.04 497.17 L284.43 497.50 L284.81 497.17 L284.43 496.83 M284.43 500.83 L284.04 501.17 L284.43 501.50 L284.81 501.17 L284.43 500.83 M289.78 494.50 L288.64 494.83 L287.87 495.83 L287.49 497.50 L287.49 498.50 L287.87 500.17 L288.64 501.17 L289.78 501.50 L290.55 501.50 L291.70 501.17 L292.46 500.17 L292.85 498.50 L292.85 497.50 L292.46 495.83 L291.70 494.83 L290.55 494.50 L289.78 494.50 M297.44 494.50 L296.29 494.83 L295.52 495.83 L295.14 497.50 L295.14 498.50 L295.52 500.17 L296.29 501.17 L297.44 501.50 L298.20 501.50 L299.35 501.17 L300.12 500.17 L300.50 498.50 L300.50 497.50 L300.12 495.83 L299.35 494.83 L298.20 494.50 L297.44 494.50" stroke="#fff"/>
<path d="M425.50 495.83 L426.27 495.50 L427.41 494.50 L427.41 501.50 M432.39 496.17 L432.39 495.83 L432.77 495.17 L433.15 494.83 L433.92 494.50 L435.45 494.50 L436.22 494.83 L436.60 495.17 L436.98 495.83 L436.98 496.50 L436.60 497.17 L435.83 498.17 L432.01 501.50 L437.36 501.50 M440.43 496.83 L440.04 497.17 L440.43 497.50 L440.81 497.17 L440.43 496.83 M440.43 500.83 L440.04 501.17 L440.43 501.50 L440.81 501.17 L440.43 500.83 M445.78 494.50 L444.64 494.83 L443.87 495.83 L443.49 497.50 L443.49 498.50 L443.87 500.17 L444.64 501.17 L445.78 501.50 L446.55 501.50 L447.70 501.17 L448.46 500.17 L448.85 498.50 L448.85 497.50 L448.46 495.83 L447.70 494.83 L446.55 494.50 L445.78 494.50 M453.44 494.50 L452.29 494.83 L451.52 495.83 L451.14 497.50 L451.14 498.50 L451.52 500.17 L452.29 501.17 L453.44 501.50 L454.20 501.50 L455.35 501.17 L456.12 500.17 L456.50 498.50 L456.50 497.50 L456.12 495.83 L455.35 494.83 L454.20 494.50 L453.44 494.50" stroke="#fff"/>
<path d="M583.79 494.50 L582.64 494.83 L581.88 495.83 L581.50 497.50 L581.50 498.50 L581.88 500.17 L582.64 501.17 L583.79 501.50 L584.55 501.50 L585.69 501.17 L586.45 500.17 L586.83 498.50 L586.83 497.50 L586.45 495.83 L585.69 494.83 L584.55 494.50 L583.79 494.50 M591.02 494.50 L589.88 494.83 L589.50 495.50 L589.50 496.17 L589.88 496.83 L590.64 497.17 L592.17 497.50 L593.31 497.83 L594.07 498.50 L594.45 499.17 L594.45 500.17 L594.07 500.83 L593.69 501.17 L592.55 501.50 L591.02 501.50 L589.88 501.17 L589.50 500.83 L589.12 500.17 L589.12 499.17 L589.50 498.50 L590.26 497.83 L591.40 497.50 L592.93 497.17 L593.69 496.83 L594.07 496.17 L594.07 495.50 L593.69 494.83 L592.55 494.50 L591.02 494.50 M597.50 496.83 L597.12 497.17 L597.50 497.50 L597.88 497.17 L597.50 496.83 M597.50 500.83 L597.12 501.17 L597.50 501.50 L597.88 501.17 L597.50 500.83 M602.83 494.50 L601.69 494.83 L600.93 495.83 L600.55 497.50 L600.55 498.50 L600.93 500.17 L601.69 501.17 L602.83 501.50 L603.60 501.50 L604.74 501.17 L605.50 500.17 L605.88 498.50 L605.88 497.50 L605.50 495.83 L604.74 494.83 L603.60 494.50 L602.83 494.50 M610.45 494.50 L609.31 494.83 L608.55 495.83 L608.17 497.50 L608.17 498.50 L608.55 500.17 L609.31 501.17 L610.45 501.50 L611.21 501.50 L612.36 501.17 L613.12 500.17 L613.50 498.50 L613.50 497.50 L613.12 495.83 L612.36 494.83 L611.21 494.50 L610.45 494.50" stroke="#fff"/>
<path d="M21.13 53.50 L21.13 61.50 M18.50 53.50 L23.77 53.50 M25.65 53.50 L25.65 61.50 M25.65 53.50 L28.66 61.50 M31.67 53.50 L28.66 61.50 M31.67 53.50 L31.67 61.50 M45.59 54.64 L44.84 53.88 L43.71 53.50 L42.20 53.50 L41.07 53.88 L40.32 54.64 L40.32 55.40 L40.70 56.17 L41.07 56.55 L41.83 56.93 L44.08 57.69 L44.84 58.07 L45.21 58.45 L45.59 59.21 L45.59 60.36 L44.84 61.12 L43.71 61.50 L42.20 61.50 L41.07 61.12 L40.32 60.36 M48.22 53.50 L48.22 59.21 L48.60 60.36 L49.35 61.12 L50.48 61.50 L51.23 61.50 L52.36 61.12 L53.11 60.36 L53.49 59.21 L53.49 53.50 M56.50 53.50 L56.50 61.50 M56.50 53.50 L59.89 53.50 L61.01 53.88 L61.39 54.26 L61.77 55.02 L61.77 55.79 L61.39 56.55 L61.01 56.93 L59.89 57.31 M56.50 57.31 L59.89 57.31 L61.01 57.69 L61.39 58.07 L61.77 58.83 L61.77 59.98 L61.39 60.74 L61.01 61.12 L59.89 61.50 L56.50 61.50 M64.40 53.50 L64.40 61.50 M64.40 53.50 L67.41 61.50 M70.42 53.50 L67.41 61.50 M70.42 53.50 L70.42 61.50 M75.31 53.50 L74.56 53.88 L73.81 54.64 L73.43 55.40 L73.05 56.55 L73.05 58.45 L73.43 59.60 L73.81 60.36 L74.56 61.12 L75.31 61.50 L76.82 61.50 L77.57 61.12 L78.32 60.36 L78.70 59.60 L79.07 58.45 L79.07 56.55 L78.70 55.40 L78.32 54.64 L77.57 53.88 L76.82 53.50 L75.31 53.50 M81.71 53.50 L81.71 61.50 M81.71 53.50 L84.34 53.50 L85.47 53.88 L86.22 54.64 L86.60 55.40 L86.98 56.55 L86.98 58.45 L86.60 59.60 L86.22 60.36 L85.47 61.12 L84.34 61.50 L81.71 61.50 M89.61 53.50 L89.61 61.50 M89.61 53.50 L94.50 53.50 M89.61 57.31 L92.62 57.31 M89.61 61.50 L94.50 61.50" stroke="#fff"/>
<path d="M8.50 100.50 L8.50 108.50 M8.50 108.50 L13.08 108.50 M16.90 100.50 L13.84 108.50 M16.90 100.50 L19.95 108.50 M14.99 105.83 L18.81 105.83 M26.82 101.64 L26.06 100.88 L24.91 100.50 L23.39 100.50 L22.24 100.88 L21.48 101.64 L21.48 102.40 L21.86 103.17 L22.24 103.55 L23.01 103.93 L25.30 104.69 L26.06 105.07 L26.44 105.45 L26.82 106.21 L26.82 107.36 L26.06 108.12 L24.91 108.50 L23.39 108.50 L22.24 108.12 L21.48 107.36 M34.84 102.40 L34.46 101.64 L33.70 100.88 L32.93 100.50 L31.40 100.50 L30.64 100.88 L29.88 101.64 L29.50 102.40 L29.11 103.55 L29.11 105.45 L29.50 106.60 L29.88 107.36 L30.64 108.12 L31.40 108.50 L32.93 108.50 L33.70 108.12 L34.46 107.36 L34.84 106.60 M39.42 100.50 L38.66 100.88 L37.89 101.64 L37.51 102.40 L37.13 103.55 L37.13 105.45 L37.51 106.60 L37.89 107.36 L38.66 108.12 L39.42 108.50 L40.95 108.50 L41.71 108.12 L42.48 107.36 L42.86 106.60 L43.24 105.45 L43.24 103.55 L42.86 102.40 L42.48 101.64 L41.71 100.88 L40.95 100.50 L39.42 100.50 M52.02 98.98 L45.15 111.17 M54.31 100.50 L54.31 108.50 M54.31 100.50 L59.27 100.50 M54.31 104.31 L57.36 104.31 M54.31 108.50 L59.27 108.50 M61.56 100.50 L61.56 108.50 M66.14 100.50 L66.14 108.50 M63.47 100.50 L68.82 100.50 M79.50 98.98 L78.74 99.74 L77.98 100.88 L77.21 102.40 L76.83 104.31 L76.83 105.83 L77.21 107.74 L77.98 109.26 L78.74 110.40 L79.50 111.17 M82.18 100.50 L82.18 108.50 M82.18 100.50 L84.85 100.50 L85.99 100.88 L86.76 101.64 L87.14 102.40 L87.52 103.55 L87.52 105.45 L87.14 106.60 L86.76 107.36 L85.99 108.12 L84.85 108.50 L82.18 108.50 M90.19 100.50 L90.19 108.50 M90.19 100.50 L93.63 100.50 L94.77 100.88 L95.16 101.26 L95.54 102.02 L95.54 103.17 L95.16 103.93 L94.77 104.31 L93.63 104.69 L90.19 104.69 M97.83 98.98 L98.59 99.74 L99.35 100.88 L100.12 102.40 L100.50 104.31 L100.50 105.83 L100.12 107.74 L99.35 109.26 L98.59 110.40 L97.83 111.17" stroke="#fff"/>
<path d="M51.75 146.50 L51.00 146.88 L50.25 147.64 L49.88 148.40 L49.50 149.55 L49.50 151.45 L49.88 152.60 L50.25 153.36 L51.00 154.12 L51.75 154.50 L53.25 154.50 L54.00 154.12 L54.75 153.36 L55.12 152.60 L55.50 151.45 L55.50 149.55 L55.12 148.40 L54.75 147.64 L54.00 146.88 L53.25 146.50 L51.75 146.50 M63.00 147.64 L62.25 146.88 L61.12 146.50 L59.62 146.50 L58.50 146.88 L57.75 147.64 L57.75 148.40 L58.12 149.17 L58.50 149.55 L59.25 149.93 L61.50 150.69 L62.25 151.07 L62.62 151.45 L63.00 152.21 L63.00 153.36 L62.25 154.12 L61.12 154.50 L59.62 154.50 L58.50 154.12 L57.75 153.36 M64.12 154.50 L72.00 154.50 M73.50 146.50 L77.62 146.50 L75.38 149.55 L76.50 149.55 L77.25 149.93 L77.62 150.31 L78.00 151.45 L78.00 152.21 L77.62 153.36 L76.88 154.12 L75.75 154.50 L74.62 154.50 L73.50 154.12 L73.12 153.74 L72.75 152.98 M82.50 146.50 L81.38 146.88 L80.62 148.02 L80.25 149.93 L80.25 151.07 L80.62 152.98 L81.38 154.12 L82.50 154.50 L83.25 154.50 L84.38 154.12 L85.12 152.98 L85.50 151.07 L85.50 149.93 L85.12 148.02 L84.38 146.88 L83.25 146.50 L82.50 146.50 M92.62 149.17 L92.25 150.31 L91.50 151.07 L90.38 151.45 L90.00 151.45 L88.88 151.07 L88.12 150.31 L87.75 149.17 L87.75 148.79 L88.12 147.64 L88.88 146.88 L90.00 146.50 L90.38 146.50 L91.50 146.88 L92.25 147.64 L92.62 149.17 L92.62 151.07 L92.25 152.98 L91.50 154.12 L90.38 154.50 L89.62 154.50 L88.50 154.12 L88.12 153.36 M95.62 148.40 L95.62 148.02 L96.00 147.26 L96.38 146.88 L97.12 146.50 L98.62 146.50 L99.38 146.88 L99.75 147.26 L100.12 148.02 L100.12 148.79 L99.75 149.55 L99.00 150.69 L95.25 154.50 L100.50 154.50" stroke="#fff"/>
<path d="M51.77 181.50 L51.01 181.88 L50.26 182.64 L49.88 183.40 L49.50 184.55 L49.50 186.45 L49.88 187.60 L50.26 188.36 L51.01 189.12 L51.77 189.50 L53.28 189.50 L54.03 189.12 L54.79 188.36 L55.17 187.60 L55.54 186.45 L55.54 184.55 L55.17 183.40 L54.79 182.64 L54.03 181.88 L53.28 181.50 L51.77 181.50 M63.10 182.64 L62.34 181.88 L61.21 181.50 L59.70 181.50 L58.57 181.88 L57.81 182.64 L57.81 183.40 L58.19 184.17 L58.57 184.55 L59.32 184.93 L61.59 185.69 L62.34 186.07 L62.72 186.45 L63.10 187.21 L63.10 188.36 L62.34 189.12 L61.21 189.50 L59.70 189.50 L58.57 189.12 L57.81 188.36 M64.23 189.50 L72.17 189.50 M73.68 181.50 L77.83 181.50 L75.57 184.55 L76.70 184.55 L77.46 184.93 L77.83 185.31 L78.21 186.45 L78.21 187.21 L77.83 188.36 L77.08 189.12 L75.94 189.50 L74.81 189.50 L73.68 189.12 L73.30 188.74 L72.92 187.98 M81.23 181.50 L85.39 181.50 L83.12 184.55 L84.26 184.55 L85.01 184.93 L85.39 185.31 L85.77 186.45 L85.77 187.21 L85.39 188.36 L84.63 189.12 L83.50 189.50 L82.37 189.50 L81.23 189.12 L80.86 188.74 L80.48 187.98 M89.17 183.02 L89.92 182.64 L91.06 181.50 L91.06 189.50 M100.50 184.17 L100.12 185.31 L99.37 186.07 L98.23 186.45 L97.86 186.45 L96.72 186.07 L95.97 185.31 L95.59 184.17 L95.59 183.79 L95.97 182.64 L96.72 181.88 L97.86 181.50 L98.23 181.50 L99.37 181.88 L100.12 182.64 L100.50 184.17 L100.50 186.07 L100.12 187.98 L99.37 189.12 L98.23 189.50 L97.48 189.50 L96.34 189.12 L95.97 188.36" stroke="#fff"/>
<path d="M51.77 216.50 L51.01 216.88 L50.26 217.64 L49.88 218.40 L49.50 219.55 L49.50 221.45 L49.88 222.60 L50.26 223.36 L51.01 224.12 L51.77 224.50 L53.28 224.50 L54.03 224.12 L54.79 223.36 L55.17 222.60 L55.54 221.45 L55.54 219.55 L55.17 218.40 L54.79 217.64 L54.03 216.88 L53.28 216.50 L51.77 216.50 M63.10 217.64 L62.34 216.88 L61.21 216.50 L59.70 216.50 L58.57 216.88 L57.81 217.64 L57.81 218.40 L58.19 219.17 L58.57 219.55 L59.32 219.93 L61.59 220.69 L62.34 221.07 L62.72 221.45 L63.10 222.21 L63.10 223.36 L62.34 224.12 L61.21 224.50 L59.70 224.50 L58.57 224.12 L57.81 223.36 M64.23 224.50 L72.17 224.50 M73.68 216.50 L77.83 216.50 L75.57 219.55 L76.70 219.55 L77.46 219.93 L77.83 220.31 L78.21 221.45 L78.21 222.21 L77.83 223.36 L77.08 224.12 L75.94 224.50 L74.81 224.50 L73.68 224.12 L73.30 223.74 L72.92 222.98 M81.23 216.50 L85.39 216.50 L83.12 219.55 L84.26 219.55 L85.01 219.93 L85.39 220.31 L85.77 221.45 L85.77 222.21 L85.39 223.36 L84.63 224.12 L83.50 224.50 L82.37 224.50 L81.23 224.12 L80.86 223.74 L80.48 222.98 M88.79 216.50 L92.94 216.50 L90.68 219.55 L91.81 219.55 L92.57 219.93 L92.94 220.31 L93.32 221.45 L93.32 222.21 L92.94 223.36 L92.19 224.12 L91.06 224.50 L89.92 224.50 L88.79 224.12 L88.41 223.74 L88.03 222.98 M100.50 219.17 L100.12 220.31 L99.37 221.07 L98.23 221.45 L97.86 221.45 L96.72 221.07 L95.97 220.31 L95.59 219.17 L95.59 218.79 L95.97 217.64 L96.72 216.88 L97.86 216.50 L98.23 216.50 L99.37 216.88 L100.12 217.64 L100.50 219.17 L100.50 221.07 L100.12 222.98 L99.37 224.12 L98.23 224.50 L97.48 224.50 L96.34 224.12 L95.97 223.36" stroke="#fff"/>
<path d="M51.75 252.50 L51.00 252.88 L50.25 253.64 L49.88 254.40 L49.50 255.55 L49.50 257.45 L49.88 258.60 L50.25 259.36 L51.00 260.12 L51.75 260.50 L53.25 260.50 L54.00 260.12 L54.75 259.36 L55.12 258.60 L55.50 257.45 L55.50 255.55 L55.12 254.40 L54.75 253.64 L54.00 252.88 L53.25 252.50 L51.75 252.50 M63.00 253.64 L62.25 252.88 L61.12 252.50 L59.62 252.50 L58.50 252.88 L57.75 253.64 L57.75 254.40 L58.12 255.17 L58.50 255.55 L59.25 255.93 L61.50 256.69 L62.25 257.07 L62.62 257.45 L63.00 258.21 L63.00 259.36 L62.25 260.12 L61.12 260.50 L59.62 260.50 L58.50 260.12 L57.75 259.36 M64.12 260.50 L72.00 260.50 M73.50 252.50 L77.62 252.50 L75.38 255.55 L76.50 255.55 L77.25 255.93 L77.62 256.31 L78.00 257.45 L78.00 258.21 L77.62 259.36 L76.88 260.12 L75.75 260.50 L74.62 260.50 L73.50 260.12 L73.12 259.74 L72.75 258.98 M81.00 252.50 L85.12 252.50 L82.88 255.55 L84.00 255.55 L84.75 255.93 L85.12 256.31 L85.50 257.45 L85.50 258.21 L85.12 259.36 L84.38 260.12 L83.25 260.50 L82.12 260.50 L81.00 260.12 L80.62 259.74 L80.25 258.98 M91.50 252.50 L87.75 257.83 L93.38 257.83 M91.50 252.50 L91.50 260.50 M97.50 252.50 L96.38 252.88 L95.62 254.02 L95.25 255.93 L95.25 257.07 L95.62 258.98 L96.38 260.12 L97.50 260.50 L98.25 260.50 L99.38 260.12 L100.12 258.98 L100.50 257.07 L100.50 255.93 L100.12 254.02 L99.38 252.88 L98.25 252.50 L97.50 252.50" stroke="#fff"/>
<path d="M51.85 287.50 L51.07 287.88 L50.28 288.64 L49.89 289.40 L49.50 290.55 L49.50 292.45 L49.89 293.60 L50.28 294.36 L51.07 295.12 L51.85 295.50 L53.42 295.50 L54.21 295.12 L54.99 294.36 L55.38 293.60 L55.78 292.45 L55.78 290.55 L55.38 289.40 L54.99 288.64 L54.21 287.88 L53.42 287.50 L51.85 287.50 M63.62 288.64 L62.84 287.88 L61.66 287.50 L60.09 287.50 L58.92 287.88 L58.13 288.64 L58.13 289.40 L58.52 290.17 L58.92 290.55 L59.70 290.93 L62.05 291.69 L62.84 292.07 L63.23 292.45 L63.62 293.21 L63.62 294.36 L62.84 295.12 L61.66 295.50 L60.09 295.50 L58.92 295.12 L58.13 294.36 M64.80 295.50 L73.04 295.50 M74.61 287.50 L78.92 287.50 L76.57 290.55 L77.75 290.55 L78.53 290.93 L78.92 291.31 L79.32 292.45 L79.32 293.21 L78.92 294.36 L78.14 295.12 L76.96 295.50 L75.78 295.50 L74.61 295.12 L74.22 294.74 L73.82 293.98 M82.45 287.50 L86.77 287.50 L84.42 290.55 L85.59 290.55 L86.38 290.93 L86.77 291.31 L87.16 292.45 L87.16 293.21 L86.77 294.36 L85.98 295.12 L84.81 295.50 L83.63 295.50 L82.45 295.12 L82.06 294.74 L81.67 293.98 M93.44 287.50 L89.52 292.83 L95.40 292.83 M93.44 287.50 L93.44 295.50 M98.54 289.02 L99.32 288.64 L100.50 287.50 L100.50 295.50" stroke="#fff"/>
<path d="M51.75 322.50 L51.00 322.88 L50.25 323.64 L49.88 324.40 L49.50 325.55 L49.50 327.45 L49.88 328.60 L50.25 329.36 L51.00 330.12 L51.75 330.50 L53.25 330.50 L54.00 330.12 L54.75 329.36 L55.12 328.60 L55.50 327.45 L55.50 325.55 L55.12 324.40 L54.75 323.64 L54.00 322.88 L53.25 322.50 L51.75 322.50 M63.00 323.64 L62.25 322.88 L61.12 322.50 L59.62 322.50 L58.50 322.88 L57.75 323.64 L57.75 324.40 L58.12 325.17 L58.50 325.55 L59.25 325.93 L61.50 326.69 L62.25 327.07 L62.62 327.45 L63.00 328.21 L63.00 329.36 L62.25 330.12 L61.12 330.50 L59.62 330.50 L58.50 330.12 L57.75 329.36 M64.12 330.50 L72.00 330.50 M73.50 322.50 L77.62 322.50 L75.38 325.55 L76.50 325.55 L77.25 325.93 L77.62 326.31 L78.00 327.45 L78.00 328.21 L77.62 329.36 L76.88 330.12 L75.75 330.50 L74.62 330.50 L73.50 330.12 L73.12 329.74 L72.75 328.98 M81.00 322.50 L85.12 322.50 L82.88 325.55 L84.00 325.55 L84.75 325.93 L85.12 326.31 L85.50 327.45 L85.50 328.21 L85.12 329.36 L84.38 330.12 L83.25 330.50 L82.12 330.50 L81.00 330.12 L80.62 329.74 L80.25 328.98 M91.50 322.50 L87.75 327.83 L93.38 327.83 M91.50 322.50 L91.50 330.50 M95.62 324.40 L95.62 324.02 L96.00 323.26 L96.38 322.88 L97.12 322.50 L98.62 322.50 L99.38 322.88 L99.75 323.26 L100.12 324.02 L100.12 324.79 L99.75 325.55 L99.00 326.69 L95.25 330.50 L100.50 330.50" stroke="#fff"/>
<path d="M51.75 357.50 L51.00 357.88 L50.25 358.64 L49.88 359.40 L49.50 360.55 L49.50 362.45 L49.88 363.60 L50.25 364.36 L51.00 365.12 L51.75 365.50 L53.25 365.50 L54.00 365.12 L54.75 364.36 L55.12 363.60 L55.50 362.45 L55.50 360.55 L55.12 359.40 L54.75 358.64 L54.00 357.88 L53.25 357.50 L51.75 357.50 M63.00 358.64 L62.25 357.88 L61.12 357.50 L59.62 357.50 L58.50 357.88 L57.75 358.64 L57.75 359.40 L58.12 360.17 L58.50 360.55 L59.25 360.93 L61.50 361.69 L62.25 362.07 L62.62 362.45 L63.00 363.21 L63.00 364.36 L62.25 365.12 L61.12 365.50 L59.62 365.50 L58.50 365.12 L57.75 364.36 M64.12 365.50 L72.00 365.50 M73.50 357.50 L77.62 357.50 L75.38 360.55 L76.50 360.55 L77.25 360.93 L77.62 361.31 L78.00 362.45 L78.00 363.21 L77.62 364.36 L76.88 365.12 L75.75 365.50 L74.62 365.50 L73.50 365.12 L73.12 364.74 L72.75 363.98 M81.00 357.50 L85.12 357.50 L82.88 360.55 L84.00 360.55 L84.75 360.93 L85.12 361.31 L85.50 362.45 L85.50 363.21 L85.12 364.36 L84.38 365.12 L83.25 365.50 L82.12 365.50 L81.00 365.12 L80.62 364.74 L80.25 363.98 M92.62 358.64 L92.25 357.88 L91.12 357.50 L90.38 357.50 L89.25 357.88 L88.50 359.02 L88.12 360.93 L88.12 362.83 L88.50 364.36 L89.25 365.12 L90.38 365.50 L90.75 365.50 L91.88 365.12 L92.62 364.36 L93.00 363.21 L93.00 362.83 L92.62 361.69 L91.88 360.93 L90.75 360.55 L90.38 360.55 L89.25 360.93 L88.50 361.69 L88.12 362.83 M97.50 357.50 L96.38 357.88 L95.62 359.02 L95.25 360.93 L95.25 362.07 L95.62 363.98 L96.38 365.12 L97.50 365.50 L98.25 365.50 L99.38 365.12 L100.12 363.98 L100.50 362.07 L100.50 360.93 L100.12 359.02 L99.38 357.88 L98.25 357.50 L97.50 357.50" stroke="#fff"/>
<path d="M51.85 392.50 L51.07 392.88 L50.28 393.64 L49.89 394.40 L49.50 395.55 L49.50 397.45 L49.89 398.60 L50.28 399.36 L51.07 400.12 L51.85 400.50 L53.42 400.50 L54.21 400.12 L54.99 399.36 L55.38 398.60 L55.78 397.45 L55.78 395.55 L55.38 394.40 L54.99 393.64 L54.21 392.88 L53.42 392.50 L51.85 392.50 M63.62 393.64 L62.84 392.88 L61.66 392.50 L60.09 392.50 L58.92 392.88 L58.13 393.64 L58.13 394.40 L58.52 395.17 L58.92 395.55 L59.70 395.93 L62.05 396.69 L62.84 397.07 L63.23 397.45 L63.62 398.21 L63.62 399.36 L62.84 400.12 L61.66 400.50 L60.09 400.50 L58.92 400.12 L58.13 399.36 M64.80 400.50 L73.04 400.50 M74.61 392.50 L78.92 392.50 L76.57 395.55 L77.75 395.55 L78.53 395.93 L78.92 396.31 L79.32 397.45 L79.32 398.21 L78.92 399.36 L78.14 400.12 L76.96 400.50 L75.78 400.50 L74.61 400.12 L74.22 399.74 L73.82 398.98 M82.45 392.50 L86.77 392.50 L84.42 395.55 L85.59 395.55 L86.38 395.93 L86.77 396.31 L87.16 397.45 L87.16 398.21 L86.77 399.36 L85.98 400.12 L84.81 400.50 L83.63 400.50 L82.45 400.12 L82.06 399.74 L81.67 398.98 M94.62 393.64 L94.22 392.88 L93.05 392.50 L92.26 392.50 L91.08 392.88 L90.30 394.02 L89.91 395.93 L89.91 397.83 L90.30 399.36 L91.08 400.12 L92.26 400.50 L92.65 400.50 L93.83 400.12 L94.62 399.36 L95.01 398.21 L95.01 397.83 L94.62 396.69 L93.83 395.93 L92.65 395.55 L92.26 395.55 L91.08 395.93 L90.30 396.69 L89.91 397.83 M98.54 394.02 L99.32 393.64 L100.50 392.50 L100.50 400.50" stroke="#fff"/>
<path d="M87.50 425.83 L88.25 425.50 L89.36 424.50 L89.36 431.50 M96.07 424.50 L94.95 424.83 L94.21 425.83 L93.83 427.50 L93.83 428.50 L94.21 430.17 L94.95 431.17 L96.07 431.50 L96.81 431.50 L97.93 431.17 L98.68 430.17 L99.05 428.50 L99.05 427.50 L98.68 425.83 L97.93 424.83 L96.81 424.50 L96.07 424.50 M103.52 424.50 L102.40 424.83 L101.66 425.83 L101.28 427.50 L101.28 428.50 L101.66 430.17 L102.40 431.17 L103.52 431.50 L104.26 431.50 L105.38 431.17 L106.13 430.17 L106.50 428.50 L106.50 427.50 L106.13 425.83 L105.38 424.83 L104.26 424.50 L103.52 424.50" stroke="#fff"/>
<path d="M95.41 436.50 L94.26 436.83 L93.88 437.50 L93.88 438.17 L94.26 438.83 L95.03 439.17 L96.56 439.50 L97.71 439.83 L98.47 440.50 L98.85 441.17 L98.85 442.17 L98.47 442.83 L98.09 443.17 L96.94 443.50 L95.41 443.50 L94.26 443.17 L93.88 442.83 L93.50 442.17 L93.50 441.17 L93.88 440.50 L94.65 439.83 L95.79 439.50 L97.32 439.17 L98.09 438.83 L98.47 438.17 L98.47 437.50 L98.09 436.83 L96.94 436.50 L95.41 436.50 M103.44 436.50 L102.29 436.83 L101.53 437.83 L101.15 439.50 L101.15 440.50 L101.53 442.17 L102.29 443.17 L103.44 443.50 L104.21 443.50 L105.35 443.17 L106.12 442.17 L106.50 440.50 L106.50 439.50 L106.12 437.83 L105.35 436.83 L104.21 436.50 L103.44 436.50" stroke="#fff"/>
<path d="M93.88 471.17 L93.88 470.83 L94.26 470.17 L94.65 469.83 L95.41 469.50 L96.94 469.50 L97.71 469.83 L98.09 470.17 L98.47 470.83 L98.47 471.50 L98.09 472.17 L97.32 473.17 L93.50 476.50 L98.85 476.50 M103.44 469.50 L102.29 469.83 L101.53 470.83 L101.15 472.50 L101.15 473.50 L101.53 475.17 L102.29 476.17 L103.44 476.50 L104.21 476.50 L105.35 476.17 L106.12 475.17 L106.50 473.50 L106.50 472.50 L106.12 470.83 L105.35 469.83 L104.21 469.50 L103.44 469.50" stroke="#fff"/>
<path d="M103.64 480.50 L102.57 480.83 L101.86 481.83 L101.50 483.50 L101.50 484.50 L101.86 486.17 L102.57 487.17 L103.64 487.50 L104.36 487.50 L105.43 487.17 L106.14 486.17 L106.50 484.50 L106.50 483.50 L106.14 481.83 L105.43 480.83 L104.36 480.50 L103.64 480.50" stroke="#fff"/>
<path d="M8.50 444.50 L8.50 452.50 M8.50 452.50 L13.08 452.50 M16.91 444.50 L13.85 452.50 M16.91 444.50 L19.96 452.50 M15.00 449.83 L18.82 449.83 M26.84 445.64 L26.08 444.88 L24.93 444.50 L23.40 444.50 L22.25 444.88 L21.49 445.64 L21.49 446.40 L21.87 447.17 L22.25 447.55 L23.02 447.93 L25.31 448.69 L26.08 449.07 L26.46 449.45 L26.84 450.21 L26.84 451.36 L26.08 452.12 L24.93 452.50 L23.40 452.50 L22.25 452.12 L21.49 451.36 M34.86 446.40 L34.48 445.64 L33.72 444.88 L32.95 444.50 L31.42 444.50 L30.66 444.88 L29.90 445.64 L29.51 446.40 L29.13 447.55 L29.13 449.45 L29.51 450.60 L29.90 451.36 L30.66 452.12 L31.42 452.50 L32.95 452.50 L33.72 452.12 L34.48 451.36 L34.86 450.60 M39.45 444.50 L38.68 444.88 L37.92 445.64 L37.54 446.40 L37.16 447.55 L37.16 449.45 L37.54 450.60 L37.92 451.36 L38.68 452.12 L39.45 452.50 L40.98 452.50 L41.74 452.12 L42.50 451.36 L42.89 450.60 L43.27 449.45 L43.27 447.55 L42.89 446.40 L42.50 445.64 L41.74 444.88 L40.98 444.50 L39.45 444.50 M45.94 449.07 L52.82 449.07 M55.88 444.50 L55.88 452.50 M55.88 448.31 L56.64 447.55 L57.41 447.17 L58.55 447.17 L59.32 447.55 L60.08 448.31 L60.46 449.45 L60.46 450.21 L60.08 451.36 L59.32 452.12 L58.55 452.50 L57.41 452.50 L56.64 452.12 L55.88 451.36 M63.14 447.17 L63.14 450.98 L63.52 452.12 L64.28 452.50 L65.43 452.50 L66.19 452.12 L66.96 450.98 M66.96 447.17 L66.96 452.50 M72.69 444.50 L71.92 444.50 L71.16 444.88 L70.78 446.02 L70.78 452.50 M69.63 447.17 L72.31 447.17 M77.27 444.50 L76.51 444.50 L75.75 444.88 L75.36 446.02 L75.36 452.50 M74.22 447.17 L76.89 447.17 M79.18 449.45 L83.77 449.45 L83.77 448.69 L83.39 447.93 L83.00 447.55 L82.24 447.17 L81.09 447.17 L80.33 447.55 L79.57 448.31 L79.18 449.45 L79.18 450.21 L79.57 451.36 L80.33 452.12 L81.09 452.50 L82.24 452.50 L83.00 452.12 L83.77 451.36 M86.44 447.17 L86.44 452.50 M86.44 449.45 L86.83 448.31 L87.59 447.55 L88.35 447.17 L89.50 447.17" stroke="#fff"/>
<path d="M310.50 511.02 L311.26 510.64 L312.39 509.50 L312.39 517.50 M321.83 512.17 L321.45 513.31 L320.70 514.07 L319.56 514.45 L319.19 514.45 L318.05 514.07 L317.30 513.31 L316.92 512.17 L316.92 511.79 L317.30 510.64 L318.05 509.88 L319.19 509.50 L319.56 509.50 L320.70 509.88 L321.45 510.64 L321.83 512.17 L321.83 514.07 L321.45 515.98 L320.70 517.12 L319.56 517.50 L318.81 517.50 L317.68 517.12 L317.30 516.36 M329.38 512.17 L329.01 513.31 L328.25 514.07 L327.12 514.45 L326.74 514.45 L325.61 514.07 L324.85 513.31 L324.47 512.17 L324.47 511.79 L324.85 510.64 L325.61 509.88 L326.74 509.50 L327.12 509.50 L328.25 509.88 L329.01 510.64 L329.38 512.17 L329.38 514.07 L329.01 515.98 L328.25 517.12 L327.12 517.50 L326.36 517.50 L325.23 517.12 L324.85 516.36 M333.92 509.50 L332.78 509.88 L332.40 510.64 L332.40 511.40 L332.78 512.17 L333.54 512.55 L335.05 512.93 L336.18 513.31 L336.94 514.07 L337.31 514.83 L337.31 515.98 L336.94 516.74 L336.56 517.12 L335.43 517.50 L333.92 517.50 L332.78 517.12 L332.40 516.74 L332.03 515.98 L332.03 514.83 L332.40 514.07 L333.16 513.31 L334.29 512.93 L335.80 512.55 L336.56 512.17 L336.94 511.40 L336.94 510.64 L336.56 509.88 L335.43 509.50 L333.92 509.50 M346.00 507.98 L339.20 520.17 M349.02 511.02 L349.78 510.64 L350.91 509.50 L350.91 517.50 M356.58 511.02 L357.33 510.64 L358.46 509.50 L358.46 517.50 M369.42 507.98 L362.62 520.17 M372.06 509.50 L376.21 509.50 L373.95 512.55 L375.08 512.55 L375.84 512.93 L376.21 513.31 L376.59 514.45 L376.59 515.21 L376.21 516.36 L375.46 517.12 L374.33 517.50 L373.19 517.50 L372.06 517.12 L371.68 516.74 L371.31 515.98 M381.12 509.50 L379.99 509.88 L379.24 511.02 L378.86 512.93 L378.86 514.07 L379.24 515.98 L379.99 517.12 L381.12 517.50 L381.88 517.50 L383.01 517.12 L383.77 515.98 L384.15 514.07 L384.15 512.93 L383.77 511.02 L383.01 509.88 L381.88 509.50 L381.12 509.50 M393.59 511.02 L394.34 510.64 L395.48 509.50 L395.48 517.50 M405.30 509.50 L401.52 517.50 M400.01 509.50 L405.30 509.50 M408.32 512.17 L407.94 512.55 L408.32 512.93 L408.69 512.55 L408.32 512.17 M408.32 516.74 L407.94 517.12 L408.32 517.50 L408.69 517.12 L408.32 516.74 M411.72 511.40 L411.72 511.02 L412.09 510.26 L412.47 509.88 L413.23 509.50 L414.74 509.50 L415.49 509.88 L415.87 510.26 L416.25 511.02 L416.25 511.79 L415.87 512.55 L415.12 513.69 L411.34 517.50 L416.63 517.50 M422.67 509.50 L418.89 514.83 L424.56 514.83 M422.67 509.50 L422.67 517.50 M427.20 512.17 L426.82 512.55 L427.20 512.93 L427.58 512.55 L427.20 512.17 M427.20 516.74 L426.82 517.12 L427.20 517.50 L427.58 517.12 L427.20 516.74 M432.49 509.50 L431.36 509.88 L430.60 511.02 L430.22 512.93 L430.22 514.07 L430.60 515.98 L431.36 517.12 L432.49 517.50 L433.24 517.50 L434.38 517.12 L435.13 515.98 L435.51 514.07 L435.51 512.93 L435.13 511.02 L434.38 509.88 L433.24 509.50 L432.49 509.50 M440.04 509.50 L438.91 509.88 L438.15 511.02 L437.78 512.93 L437.78 514.07 L438.15 515.98 L438.91 517.12 L440.04 517.50 L440.80 517.50 L441.93 517.12 L442.69 515.98 L443.06 514.07 L443.06 512.93 L442.69 511.02 L441.93 509.88 L440.80 509.50 L440.04 509.50 M446.08 516.74 L445.71 517.12 L446.08 517.50 L446.46 517.12 L446.08 516.74 M451.37 509.50 L450.24 509.88 L449.48 511.02 L449.11 512.93 L449.11 514.07 L449.48 515.98 L450.24 517.12 L451.37 517.50 L452.13 517.50 L453.26 517.12 L454.02 515.98 L454.39 514.07 L454.39 512.93 L454.02 511.02 L453.26 509.88 L452.13 509.50 L451.37 509.50 M458.93 509.50 L457.79 509.88 L457.04 511.02 L456.66 512.93 L456.66 514.07 L457.04 515.98 L457.79 517.12 L458.93 517.50 L459.68 517.50 L460.81 517.12 L461.57 515.98 L461.95 514.07 L461.95 512.93 L461.57 511.02 L460.81 509.88 L459.68 509.50 L458.93 509.50 M466.48 509.50 L465.35 509.88 L464.59 511.02 L464.21 512.93 L464.21 514.07 L464.59 515.98 L465.35 517.12 L466.48 517.50 L467.23 517.50 L468.37 517.12 L469.12 515.98 L469.50 514.07 L469.50 512.93 L469.12 511.02 L468.37 509.88 L467.23 509.50 L466.48 509.50" stroke="#fff"/>
<path d="M19.16 514.93 L18.84 514.36 L18.22 513.79 L17.60 513.50 L16.36 513.50 L15.74 513.79 L15.12 514.36 L14.81 514.93 L14.50 515.79 L14.50 517.21 L14.81 518.07 L15.12 518.64 L15.74 519.21 L16.36 519.50 L17.60 519.50 L18.22 519.21 L18.84 518.64 L19.16 518.07 M21.95 514.64 L22.57 514.36 L23.50 513.50 L23.50 519.50" stroke="#ff0000"/>
<path d="M40.21 514.93 L39.90 514.36 L39.27 513.79 L38.64 513.50 L37.39 513.50 L36.76 513.79 L36.13 514.36 L35.81 514.93 L35.50 515.79 L35.50 517.21 L35.81 518.07 L36.13 518.64 L36.76 519.21 L37.39 519.50 L38.64 519.50 L39.27 519.21 L39.90 518.64 L40.21 518.07 M42.41 514.93 L42.41 514.64 L42.73 514.07 L43.04 513.79 L43.67 513.50 L44.93 513.50 L45.56 513.79 L45.87 514.07 L46.19 514.64 L46.19 515.21 L45.87 515.79 L45.24 516.64 L42.10 519.50 L46.50 519.50" stroke="#00ff00"/>
<path d="M61.21 514.93 L60.90 514.36 L60.27 513.79 L59.64 513.50 L58.39 513.50 L57.76 513.79 L57.13 514.36 L56.81 514.93 L56.50 515.79 L56.50 517.21 L56.81 518.07 L57.13 518.64 L57.76 519.21 L58.39 519.50 L59.64 519.50 L60.27 519.21 L60.90 518.64 L61.21 518.07 M63.73 513.50 L67.19 513.50 L65.30 515.79 L66.24 515.79 L66.87 516.07 L67.19 516.36 L67.50 517.21 L67.50 517.79 L67.19 518.64 L66.56 519.21 L65.61 519.50 L64.67 519.50 L63.73 519.21 L63.41 518.93 L63.10 518.36" stroke="#8ce6f0"/>
<path d="M77.50 513.50 L77.50 519.50 M77.50 513.50 L81.61 513.50 M77.50 516.36 L80.03 516.36 M77.50 519.50 L81.61 519.50 M83.50 513.50 L83.50 519.50 M87.29 513.50 L87.29 519.50 M85.08 513.50 L89.50 513.50" stroke="#ffff00"/>
<path d="M104.93 30.50 L102.07 30.50 L101.79 33.93 L102.07 33.55 L102.93 33.17 L103.79 33.17 L104.64 33.55 L105.21 34.31 L105.50 35.45 L105.50 36.21 L105.21 37.36 L104.64 38.12 L103.79 38.50 L102.93 38.50 L102.07 38.12 L101.79 37.74 L101.50 36.98" stroke="#fff"/>
<path d="M104.83 39.50 L101.50 44.83 L106.50 44.83 M104.83 39.50 L104.83 47.50" stroke="#fff"/>
<path d="M102.07 48.50 L105.21 48.50 L103.50 51.55 L104.36 51.55 L104.93 51.93 L105.21 52.31 L105.50 53.45 L105.50 54.21 L105.21 55.36 L104.64 56.12 L103.79 56.50 L102.93 56.50 L102.07 56.12 L101.79 55.74 L101.50 54.98" stroke="#fff"/>
<path d="M101.79 60.40 L101.79 60.02 L102.07 59.26 L102.36 58.88 L102.93 58.50 L104.07 58.50 L104.64 58.88 L104.93 59.26 L105.21 60.02 L105.21 60.79 L104.93 61.55 L104.36 62.69 L101.50 66.50 L105.50 66.50" stroke="#fff"/>
<path d="M102.50 69.02 L103.30 68.64 L104.50 67.50 L104.50 75.50" stroke="#fff"/>
</g>
</svg>
</body></html>
